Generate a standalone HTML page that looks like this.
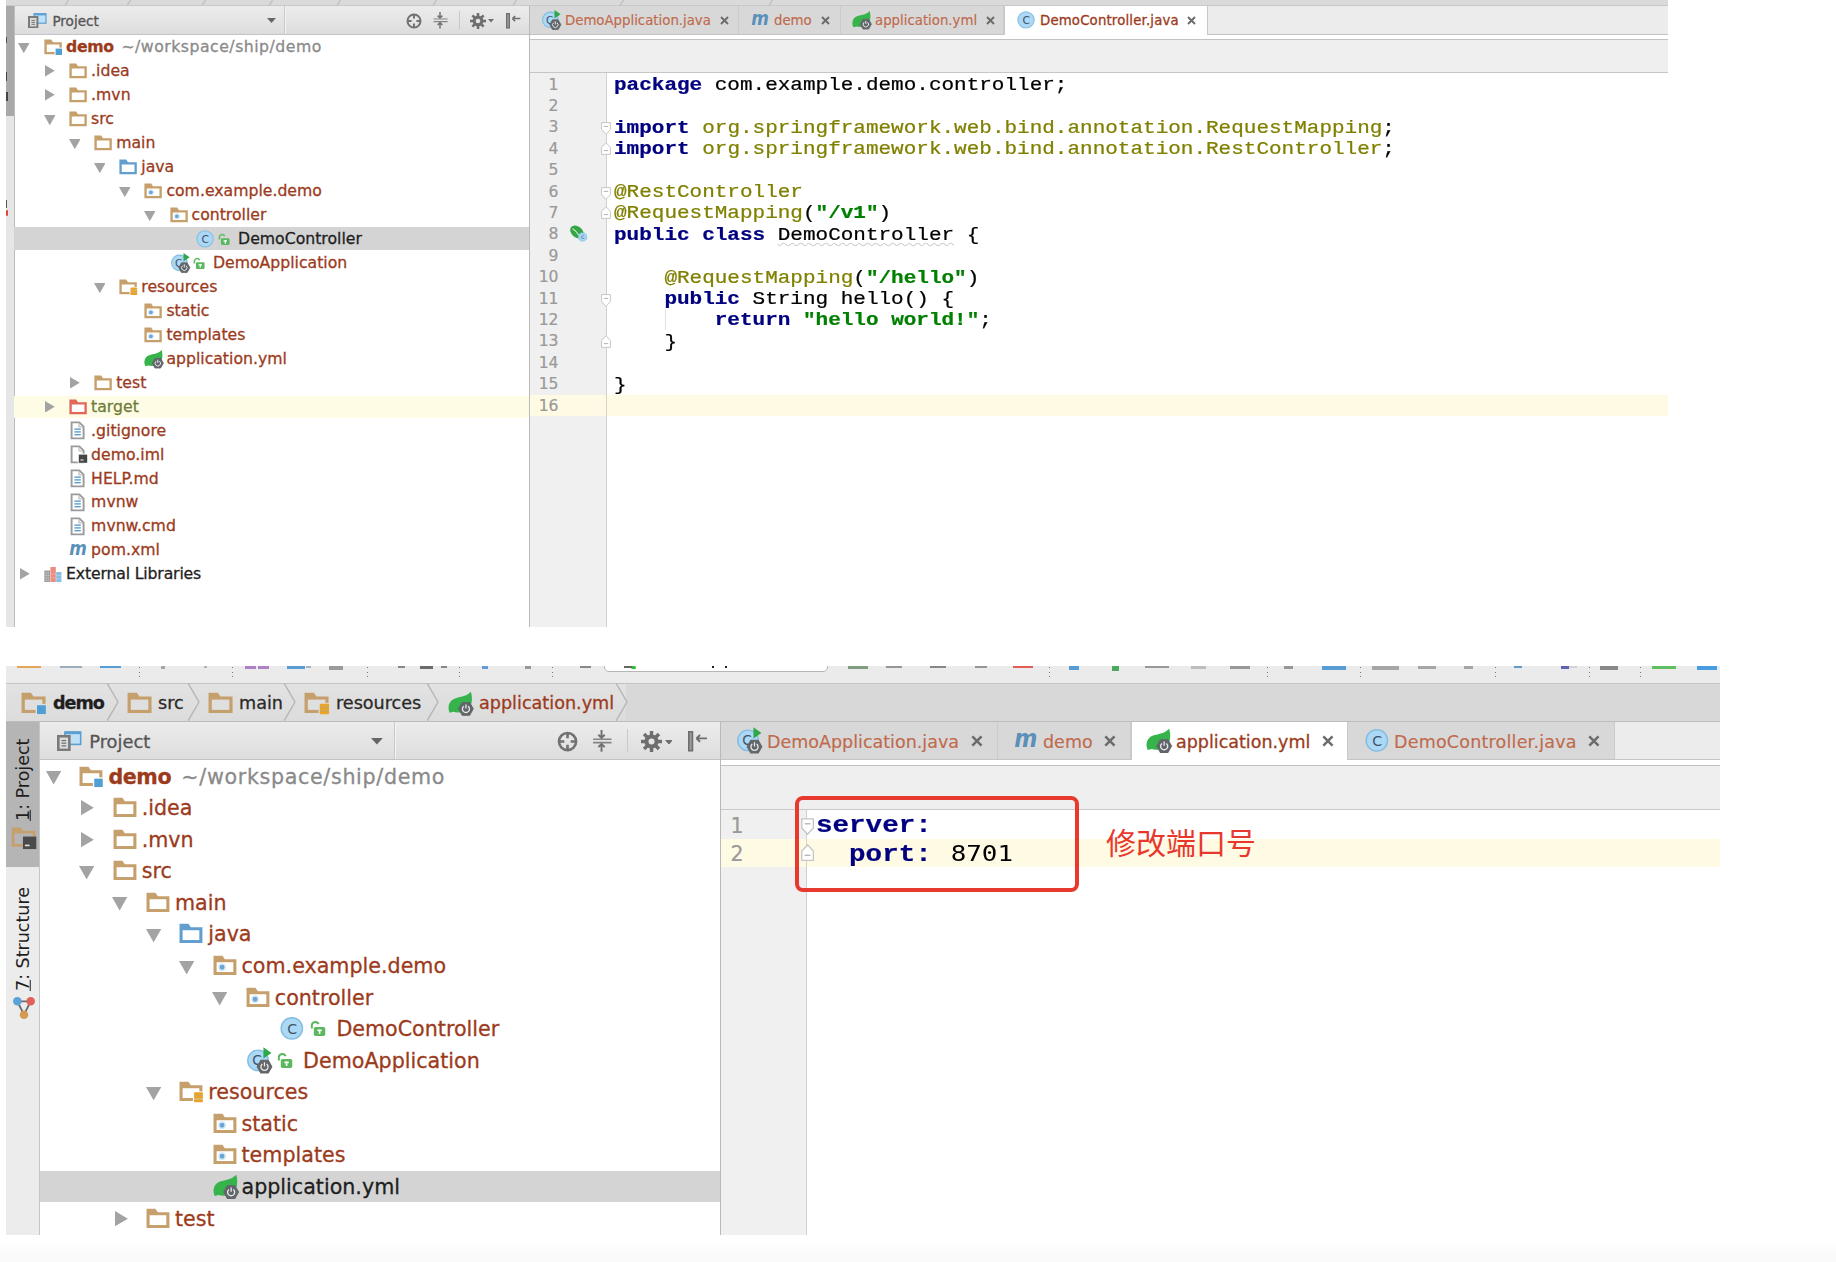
<!DOCTYPE html><html><head><meta charset="utf-8"><title>IDE screenshots</title>
<style>html,body{margin:0;padding:0;background:#fff}body{width:1836px;height:1262px;position:relative;overflow:hidden}svg{display:block}</style></head><body>
<div style="position:absolute;left:0.00px;top:1239.00px;width:1836.00px;height:23.00px;background:linear-gradient(#ffffff,#fafafa 75%);"></div>
<div style="position:absolute;left:6px;top:0;width:1662px;height:627px;background:#fff;overflow:hidden">
<div style="position:absolute;left:-6px;top:0">
<div style="position:absolute;left:6.00px;top:0.00px;width:1662.00px;height:6.00px;background:#dadada;border-bottom:1px solid #c9c9c9;box-sizing:border-box"></div>
<div style="position:absolute;left:66.00px;top:-2.00px;width:1.50px;height:9.00px;background:#c4c4c4;transform:skewX(-32deg)"></div>
<div style="position:absolute;left:128.00px;top:-2.00px;width:1.50px;height:9.00px;background:#c4c4c4;transform:skewX(-32deg)"></div>
<div style="position:absolute;left:203.00px;top:-2.00px;width:1.50px;height:9.00px;background:#c4c4c4;transform:skewX(-32deg)"></div>
<div style="position:absolute;left:270.00px;top:-2.00px;width:1.50px;height:9.00px;background:#c4c4c4;transform:skewX(-32deg)"></div>
<div style="position:absolute;left:338.00px;top:-2.00px;width:1.50px;height:9.00px;background:#c4c4c4;transform:skewX(-32deg)"></div>
<div style="position:absolute;left:434.00px;top:-2.00px;width:1.50px;height:9.00px;background:#c4c4c4;transform:skewX(-32deg)"></div>
<div style="position:absolute;left:514.00px;top:-2.00px;width:1.50px;height:9.00px;background:#c4c4c4;transform:skewX(-32deg)"></div>
<div style="position:absolute;left:621.00px;top:-2.00px;width:1.50px;height:9.00px;background:#c4c4c4;transform:skewX(-32deg)"></div>
<div style="position:absolute;left:770.00px;top:-2.00px;width:1.50px;height:9.00px;background:#c4c4c4;transform:skewX(-32deg)"></div>
<div style="position:absolute;left:6.00px;top:6.00px;width:8.00px;height:110.00px;background:#a9a9a9;"></div>
<div style="position:absolute;left:6.00px;top:116.00px;width:8.00px;height:511.00px;background:#e6e6e6;"></div>
<div style="position:absolute;left:6.00px;top:37.00px;width:1.30px;height:6.00px;background:#555;"></div>
<div style="position:absolute;left:6.00px;top:72.00px;width:1.40px;height:9.00px;background:#444;"></div>
<div style="position:absolute;left:6.00px;top:92.00px;width:1.80px;height:9.00px;background:#444;"></div>
<div style="position:absolute;left:6.00px;top:200.00px;width:1.20px;height:8.00px;background:#555;"></div>
<div style="position:absolute;left:6.00px;top:210.00px;width:2.40px;height:6.00px;background:#e04a3a;border-radius:2px"></div>
<div style="position:absolute;left:14.00px;top:6.00px;width:1.00px;height:621.00px;background:#bdbdbd;"></div>
<div style="position:absolute;left:15.00px;top:6.00px;width:514.00px;height:29.00px;background:linear-gradient(#ececec,#dddddd);border-bottom:1px solid #c4c4c4;box-sizing:border-box"></div>
<svg style="position:absolute;left:28.20px;top:12.70px" width="19.00" height="15.00" viewBox="0 0 19 15" ><rect x="6" y="0.8" width="12" height="9.4" fill="#bfe0f6" stroke="#5b9fd0" stroke-width="1.2"/><rect x="6" y="0.4" width="12" height="2" fill="#5b9fd0"/><rect x="1" y="4" width="8.4" height="10.4" fill="#dcdcdc" stroke="#7a7a7a" stroke-width="2"/><rect x="3.4" y="6.8" width="3.6" height="1" fill="#777"/><rect x="3.4" y="8.8" width="3.6" height="1" fill="#777"/><rect x="3.4" y="10.8" width="3.6" height="1" fill="#777"/></svg>
<div style="position:absolute;left:52.40px;top:11.21px;height:20.36px;line-height:20.36px;font-family:'DejaVu Sans','Liberation Sans',sans-serif;font-size:13.57px;color:#555;font-weight:normal;white-space:pre;-webkit-text-stroke-width:0.3px;">Project</div>
<svg style="position:absolute;left:266.50px;top:18.40px" width="9.00" height="5.00" viewBox="0 0 9 5" ><path d="M0 0 H9 L4.5 5 Z" fill="#666"/></svg>
<div style="position:absolute;left:284.00px;top:6.00px;width:1.00px;height:28.00px;background:#c9c9c9;border-right:1px solid #f3f3f3"></div>
<svg style="position:absolute;left:405.60px;top:12.90px" width="16.00" height="16.00" viewBox="0 0 16 16" ><circle cx="8" cy="8" r="6.5" fill="none" stroke="#727272" stroke-width="2"/><path d="M8 1 V5.6 M8 10.4 V15 M1 8 H5.6 M10.4 8 H15" stroke="#727272" stroke-width="2"/></svg>
<svg style="position:absolute;left:432.00px;top:12.40px" width="16.00" height="16.60" viewBox="0 0 16 16.6" ><path d="M1.6 7 H15.6 M1.6 9.6 H15.6" stroke="#858585" stroke-width="1.2"/><path d="M8 0 V5.6 M5.6 3.6 L8 6 L10.4 3.6 M8 16.6 V11 M5.6 13 L8 10.6 L10.4 13" stroke="#727272" stroke-width="1.5" fill="none"/></svg>
<div style="position:absolute;left:459.00px;top:11.00px;width:1.00px;height:18.00px;background:#c9c9c9;"></div>
<svg style="position:absolute;left:470.00px;top:12.80px" width="16.00" height="16.00" viewBox="0 0 16 16" ><rect x="6.7" y="0" width="2.6" height="16" fill="#6e6e6e" transform="rotate(0 8 8)"/><rect x="6.7" y="0" width="2.6" height="16" fill="#6e6e6e" transform="rotate(45 8 8)"/><rect x="6.7" y="0" width="2.6" height="16" fill="#6e6e6e" transform="rotate(90 8 8)"/><rect x="6.7" y="0" width="2.6" height="16" fill="#6e6e6e" transform="rotate(135 8 8)"/><circle cx="8" cy="8" r="5.4" fill="#6e6e6e"/><circle cx="8" cy="8" r="2.3" fill="#e4e4e4"/></svg>
<svg style="position:absolute;left:487.60px;top:19.40px" width="6.00" height="3.60" viewBox="0 0 6 3.6" ><path d="M0 0 H6 L3 3.6 Z" fill="#6e6e6e"/></svg>
<svg style="position:absolute;left:505.60px;top:12.60px" width="15.00" height="16.00" viewBox="0 0 15 16" ><rect x="0.6" y="0.6" width="2.8" height="14.4" fill="#9a9a9a" stroke="#6e6e6e" stroke-width="1.2"/><path d="M6.4 5.6 H14.4 M6.4 5.6 L9.2 3 M6.4 5.6 L9.2 8.2" stroke="#6e6e6e" stroke-width="1.5" fill="none"/></svg>
<svg style="position:absolute;left:18.40px;top:43.48px" width="11.60" height="10.20" viewBox="0 0 11.6 10.2" ><path d="M0 0 H11.6 L5.8 10.2 Z" fill="#a3a3a3"/></svg>
<svg style="position:absolute;left:44.00px;top:39.28px" width="18.00" height="16.00" viewBox="0 0 18 16" overflow="visible"><path d="M0.4 0.5 H7.2 L9 3.2 H17.8 V15.3 H0.4 Z" fill="#c6a06c"/><rect x="2.75" y="5.5" width="12.7" height="7.45" fill="#fff"/><rect x="10.6" y="8.6" width="7.4" height="7.4" fill="#fff"/><rect x="11.6" y="9.6" width="6.4" height="6.4" fill="#4f9fd6"/></svg>
<div style="position:absolute;left:66.00px;top:35.40px;height:23.55px;line-height:23.55px;font-family:'DejaVu Sans','Liberation Sans',sans-serif;font-size:15.70px;color:#9c3b1c;font-weight:normal;white-space:pre;-webkit-text-stroke-width:0.3px;"><b style="letter-spacing:-0.02em">demo</b><span style="color:#8a8a8a;font-weight:normal;letter-spacing:0.50px;margin-left:2.21px"> ~/workspace/ship/demo</span></div>
<svg style="position:absolute;left:45.30px;top:65.42px" width="9.80" height="11.60" viewBox="0 0 9.8 11.6" ><path d="M0 0 V11.6 L9.8 5.8 Z" fill="#a3a3a3"/></svg>
<svg style="position:absolute;left:69.10px;top:63.23px" width="18.00" height="16.00" viewBox="0 0 18 16" overflow="visible"><path d="M0.4 0.5 H7.2 L9 3.2 H17.8 V15.3 H0.4 Z" fill="#c6a06c"/><rect x="2.75" y="5.5" width="12.7" height="7.45" fill="#fff"/></svg>
<div style="position:absolute;left:91.10px;top:59.35px;height:23.55px;line-height:23.55px;font-family:'DejaVu Sans','Liberation Sans',sans-serif;font-size:15.70px;color:#9c3b1c;font-weight:normal;white-space:pre;letter-spacing:0.0px;-webkit-text-stroke-width:0.3px;">.idea</div>
<svg style="position:absolute;left:45.30px;top:89.37px" width="9.80" height="11.60" viewBox="0 0 9.8 11.6" ><path d="M0 0 V11.6 L9.8 5.8 Z" fill="#a3a3a3"/></svg>
<svg style="position:absolute;left:69.10px;top:87.17px" width="18.00" height="16.00" viewBox="0 0 18 16" overflow="visible"><path d="M0.4 0.5 H7.2 L9 3.2 H17.8 V15.3 H0.4 Z" fill="#c6a06c"/><rect x="2.75" y="5.5" width="12.7" height="7.45" fill="#fff"/></svg>
<div style="position:absolute;left:91.10px;top:83.30px;height:23.55px;line-height:23.55px;font-family:'DejaVu Sans','Liberation Sans',sans-serif;font-size:15.70px;color:#9c3b1c;font-weight:normal;white-space:pre;letter-spacing:0.0px;-webkit-text-stroke-width:0.3px;">.mvn</div>
<svg style="position:absolute;left:43.50px;top:115.32px" width="11.60" height="10.20" viewBox="0 0 11.6 10.2" ><path d="M0 0 H11.6 L5.8 10.2 Z" fill="#a3a3a3"/></svg>
<svg style="position:absolute;left:69.10px;top:111.12px" width="18.00" height="16.00" viewBox="0 0 18 16" overflow="visible"><path d="M0.4 0.5 H7.2 L9 3.2 H17.8 V15.3 H0.4 Z" fill="#c6a06c"/><rect x="2.75" y="5.5" width="12.7" height="7.45" fill="#fff"/></svg>
<div style="position:absolute;left:91.10px;top:107.25px;height:23.55px;line-height:23.55px;font-family:'DejaVu Sans','Liberation Sans',sans-serif;font-size:15.70px;color:#9c3b1c;font-weight:normal;white-space:pre;letter-spacing:0.0px;-webkit-text-stroke-width:0.3px;">src</div>
<svg style="position:absolute;left:68.60px;top:139.28px" width="11.60" height="10.20" viewBox="0 0 11.6 10.2" ><path d="M0 0 H11.6 L5.8 10.2 Z" fill="#a3a3a3"/></svg>
<svg style="position:absolute;left:94.20px;top:135.07px" width="18.00" height="16.00" viewBox="0 0 18 16" overflow="visible"><path d="M0.4 0.5 H7.2 L9 3.2 H17.8 V15.3 H0.4 Z" fill="#c6a06c"/><rect x="2.75" y="5.5" width="12.7" height="7.45" fill="#fff"/></svg>
<div style="position:absolute;left:116.20px;top:131.20px;height:23.55px;line-height:23.55px;font-family:'DejaVu Sans','Liberation Sans',sans-serif;font-size:15.70px;color:#9c3b1c;font-weight:normal;white-space:pre;letter-spacing:0.0px;-webkit-text-stroke-width:0.3px;">main</div>
<svg style="position:absolute;left:93.70px;top:163.22px" width="11.60" height="10.20" viewBox="0 0 11.6 10.2" ><path d="M0 0 H11.6 L5.8 10.2 Z" fill="#a3a3a3"/></svg>
<svg style="position:absolute;left:119.30px;top:159.02px" width="18.00" height="16.00" viewBox="0 0 18 16" overflow="visible"><path d="M0.4 0.5 H7.2 L9 3.2 H17.8 V15.3 H0.4 Z" fill="#639fce"/><rect x="2.75" y="5.5" width="12.7" height="7.45" fill="#fff"/></svg>
<div style="position:absolute;left:141.30px;top:155.15px;height:23.55px;line-height:23.55px;font-family:'DejaVu Sans','Liberation Sans',sans-serif;font-size:15.70px;color:#9c3b1c;font-weight:normal;white-space:pre;letter-spacing:0.0px;-webkit-text-stroke-width:0.3px;">java</div>
<svg style="position:absolute;left:118.80px;top:187.17px" width="11.60" height="10.20" viewBox="0 0 11.6 10.2" ><path d="M0 0 H11.6 L5.8 10.2 Z" fill="#a3a3a3"/></svg>
<svg style="position:absolute;left:144.40px;top:182.97px" width="18.00" height="16.00" viewBox="0 0 18 16" overflow="visible"><path d="M0.4 0.5 H7.2 L9 3.2 H17.8 V15.3 H0.4 Z" fill="#c6a06c"/><rect x="2.75" y="5.5" width="12.7" height="7.45" fill="#fff"/><circle cx="6.9" cy="9.3" r="2.4" fill="#69a6d6" stroke="#d6e8f6" stroke-width="1.1"/></svg>
<div style="position:absolute;left:166.40px;top:179.10px;height:23.55px;line-height:23.55px;font-family:'DejaVu Sans','Liberation Sans',sans-serif;font-size:15.70px;color:#9c3b1c;font-weight:normal;white-space:pre;letter-spacing:0.0px;-webkit-text-stroke-width:0.3px;">com.example.demo</div>
<svg style="position:absolute;left:143.90px;top:211.13px" width="11.60" height="10.20" viewBox="0 0 11.6 10.2" ><path d="M0 0 H11.6 L5.8 10.2 Z" fill="#a3a3a3"/></svg>
<svg style="position:absolute;left:169.50px;top:206.93px" width="18.00" height="16.00" viewBox="0 0 18 16" overflow="visible"><path d="M0.4 0.5 H7.2 L9 3.2 H17.8 V15.3 H0.4 Z" fill="#c6a06c"/><rect x="2.75" y="5.5" width="12.7" height="7.45" fill="#fff"/><circle cx="6.9" cy="9.3" r="2.4" fill="#69a6d6" stroke="#d6e8f6" stroke-width="1.1"/></svg>
<div style="position:absolute;left:191.50px;top:203.05px;height:23.55px;line-height:23.55px;font-family:'DejaVu Sans','Liberation Sans',sans-serif;font-size:15.70px;color:#9c3b1c;font-weight:normal;white-space:pre;letter-spacing:0.0px;-webkit-text-stroke-width:0.3px;">controller</div>
<div style="position:absolute;left:14.00px;top:226.80px;width:515.00px;height:23.55px;background:#d4d4d4;"></div>
<svg style="position:absolute;left:195.60px;top:230.88px" width="18.00" height="16.00" viewBox="0 0 18 16" overflow="visible"><circle cx="9" cy="7.9" r="8.1" fill="#abd9f5" stroke="#85bde3" stroke-width="1.1"/><text x="9.2" y="11.8" font-family="DejaVu Sans, sans-serif" font-size="10.8" text-anchor="middle" fill="#3d5268">C</text></svg>
<svg style="position:absolute;left:218.40px;top:232.58px" width="13.00" height="13.00" viewBox="0 0 13 13" ><path d="M1.4 6.4 V3.8 A2.7 2.7 0 0 1 6.6 3.2" fill="none" stroke="#5cb85f" stroke-width="1.5"/><rect x="2.9" y="5.3" width="8.7" height="6.8" rx="1.3" fill="#5cb85f"/><rect x="5.6" y="7.3" width="3.4" height="1.2" fill="#fff"/><rect x="6.7" y="7.3" width="1.2" height="3.3" fill="#fff"/></svg>
<div style="position:absolute;left:238.10px;top:227.00px;height:23.55px;line-height:23.55px;font-family:'DejaVu Sans','Liberation Sans',sans-serif;font-size:15.70px;color:#1e1e1e;font-weight:normal;white-space:pre;letter-spacing:0.0px;-webkit-text-stroke-width:0.3px;">DemoController</div>
<svg style="position:absolute;left:170.50px;top:254.83px" width="18.00" height="16.00" viewBox="0 0 18 16" overflow="visible"><circle cx="8.4" cy="7.9" r="7.8" fill="#abd9f5" stroke="#85bde3" stroke-width="1.1"/><text x="7.6" y="11.6" font-family="DejaVu Sans, sans-serif" font-size="10.4" text-anchor="middle" fill="#3d5268">C</text><path d="M12.5 -2 L18.6 2.2 L12.5 6.4 Z" fill="#2fa84a"/><polygon points="18.90,12.70 16.10,17.55 10.50,17.55 7.70,12.70 10.50,7.85 16.10,7.85" fill="#62666a" stroke="#62666a" stroke-width="0.8" stroke-linejoin="round"/><path d="M11.60 10.70 A2.7 2.7 0 1 0 15.00 10.70" fill="none" stroke="#e9e9e9" stroke-width="1"/><path d="M13.30 9.30 V12.50" stroke="#e9e9e9" stroke-width="1"/></svg>
<svg style="position:absolute;left:193.30px;top:256.53px" width="13.00" height="13.00" viewBox="0 0 13 13" ><path d="M1.4 6.4 V3.8 A2.7 2.7 0 0 1 6.6 3.2" fill="none" stroke="#5cb85f" stroke-width="1.5"/><rect x="2.9" y="5.3" width="8.7" height="6.8" rx="1.3" fill="#5cb85f"/><rect x="5.6" y="7.3" width="3.4" height="1.2" fill="#fff"/><rect x="6.7" y="7.3" width="1.2" height="3.3" fill="#fff"/></svg>
<div style="position:absolute;left:213.00px;top:250.95px;height:23.55px;line-height:23.55px;font-family:'DejaVu Sans','Liberation Sans',sans-serif;font-size:15.70px;color:#9c3b1c;font-weight:normal;white-space:pre;letter-spacing:0.0px;-webkit-text-stroke-width:0.3px;">DemoApplication</div>
<svg style="position:absolute;left:93.70px;top:282.98px" width="11.60" height="10.20" viewBox="0 0 11.6 10.2" ><path d="M0 0 H11.6 L5.8 10.2 Z" fill="#a3a3a3"/></svg>
<svg style="position:absolute;left:119.30px;top:278.78px" width="18.00" height="16.00" viewBox="0 0 18 16" overflow="visible"><path d="M0.4 0.5 H7.2 L9 3.2 H17.8 V15.3 H0.4 Z" fill="#c6a06c"/><rect x="2.75" y="5.5" width="12.7" height="7.45" fill="#fff"/><rect x="10.6" y="7.9" width="7.6" height="8.6" fill="#fff"/><rect x="11.4" y="8.6" width="6.8" height="2.1" rx="0.6" fill="#eaa428"/><rect x="11.4" y="11.3" width="6.8" height="2.1" rx="0.6" fill="#eaa428"/><rect x="11.4" y="14" width="6.8" height="2.1" rx="0.6" fill="#eaa428"/><path d="M11.4 11 H18.2 M11.4 13.7 H18.2" stroke="#b97d12" stroke-width="0.5"/></svg>
<div style="position:absolute;left:141.30px;top:274.90px;height:23.55px;line-height:23.55px;font-family:'DejaVu Sans','Liberation Sans',sans-serif;font-size:15.70px;color:#9c3b1c;font-weight:normal;white-space:pre;letter-spacing:0.0px;-webkit-text-stroke-width:0.3px;">resources</div>
<svg style="position:absolute;left:144.40px;top:302.73px" width="18.00" height="16.00" viewBox="0 0 18 16" overflow="visible"><path d="M0.4 0.5 H7.2 L9 3.2 H17.8 V15.3 H0.4 Z" fill="#c6a06c"/><rect x="2.75" y="5.5" width="12.7" height="7.45" fill="#fff"/><circle cx="6.9" cy="9.3" r="2.4" fill="#69a6d6" stroke="#d6e8f6" stroke-width="1.1"/></svg>
<div style="position:absolute;left:166.40px;top:298.85px;height:23.55px;line-height:23.55px;font-family:'DejaVu Sans','Liberation Sans',sans-serif;font-size:15.70px;color:#9c3b1c;font-weight:normal;white-space:pre;letter-spacing:0.0px;-webkit-text-stroke-width:0.3px;">static</div>
<svg style="position:absolute;left:144.40px;top:326.68px" width="18.00" height="16.00" viewBox="0 0 18 16" overflow="visible"><path d="M0.4 0.5 H7.2 L9 3.2 H17.8 V15.3 H0.4 Z" fill="#c6a06c"/><rect x="2.75" y="5.5" width="12.7" height="7.45" fill="#fff"/><circle cx="6.9" cy="9.3" r="2.4" fill="#69a6d6" stroke="#d6e8f6" stroke-width="1.1"/></svg>
<div style="position:absolute;left:166.40px;top:322.80px;height:23.55px;line-height:23.55px;font-family:'DejaVu Sans','Liberation Sans',sans-serif;font-size:15.70px;color:#9c3b1c;font-weight:normal;white-space:pre;letter-spacing:0.0px;-webkit-text-stroke-width:0.3px;">templates</div>
<svg style="position:absolute;left:144.40px;top:350.62px" width="18.00" height="16.00" viewBox="0 0 18 16" overflow="visible"><path d="M17.6 -0.9 C18.8 3 18.9 8 16.6 11.5 C14 15 8 15.6 4.2 14.5 L1.3 15.2 C-0.6 11 0.6 6.5 4.5 4.6 C8.5 2.8 13.5 3.4 17.6 -0.9 Z" fill="#36b34a"/><polygon points="19.40,12.20 16.60,17.05 11.00,17.05 8.20,12.20 11.00,7.35 16.60,7.35" fill="#62666a" stroke="#62666a" stroke-width="0.8" stroke-linejoin="round"/><path d="M12.10 10.20 A2.7 2.7 0 1 0 15.50 10.20" fill="none" stroke="#e9e9e9" stroke-width="1"/><path d="M13.80 8.80 V12.00" stroke="#e9e9e9" stroke-width="1"/></svg>
<div style="position:absolute;left:166.40px;top:346.75px;height:23.55px;line-height:23.55px;font-family:'DejaVu Sans','Liberation Sans',sans-serif;font-size:15.70px;color:#9c3b1c;font-weight:normal;white-space:pre;letter-spacing:0.0px;-webkit-text-stroke-width:0.3px;">application.yml</div>
<svg style="position:absolute;left:70.40px;top:376.78px" width="9.80" height="11.60" viewBox="0 0 9.8 11.6" ><path d="M0 0 V11.6 L9.8 5.8 Z" fill="#a3a3a3"/></svg>
<svg style="position:absolute;left:94.20px;top:374.58px" width="18.00" height="16.00" viewBox="0 0 18 16" overflow="visible"><path d="M0.4 0.5 H7.2 L9 3.2 H17.8 V15.3 H0.4 Z" fill="#c6a06c"/><rect x="2.75" y="5.5" width="12.7" height="7.45" fill="#fff"/></svg>
<div style="position:absolute;left:116.20px;top:370.70px;height:23.55px;line-height:23.55px;font-family:'DejaVu Sans','Liberation Sans',sans-serif;font-size:15.70px;color:#9c3b1c;font-weight:normal;white-space:pre;letter-spacing:0.0px;-webkit-text-stroke-width:0.3px;">test</div>
<div style="position:absolute;left:14.00px;top:395.85px;width:515.00px;height:22.15px;background:#fefce5;"></div>
<svg style="position:absolute;left:45.30px;top:400.73px" width="9.80" height="11.60" viewBox="0 0 9.8 11.6" ><path d="M0 0 V11.6 L9.8 5.8 Z" fill="#a3a3a3"/></svg>
<svg style="position:absolute;left:69.10px;top:398.53px" width="18.00" height="16.00" viewBox="0 0 18 16" overflow="visible"><path d="M0.4 0.5 H7.2 L9 3.2 H17.8 V15.3 H0.4 Z" fill="#e1675b"/><rect x="2.75" y="5.5" width="12.7" height="7.45" fill="#fff"/></svg>
<div style="position:absolute;left:91.10px;top:394.65px;height:23.55px;line-height:23.55px;font-family:'DejaVu Sans','Liberation Sans',sans-serif;font-size:15.70px;color:#6f7d3a;font-weight:normal;white-space:pre;letter-spacing:0.0px;-webkit-text-stroke-width:0.3px;">target</div>
<svg style="position:absolute;left:69.10px;top:422.48px" width="18.00" height="16.00" viewBox="0 0 18 16" overflow="visible"><path d="M2.6 0.4 H10.4 L14.6 4.6 V16.4 H2.6 Z" fill="#fff" stroke="#9a9a9a" stroke-width="1.9"/><path d="M10 0.6 V5 H14.4" fill="none" stroke="#b5b5b5" stroke-width="1"/><rect x="5.4" y="6.4" width="6.4" height="1.4" fill="#5b9fd0"/><rect x="5.4" y="9.2" width="6.4" height="1.4" fill="#5b9fd0"/><rect x="5.4" y="12" width="6.4" height="1.4" fill="#5b9fd0"/></svg>
<div style="position:absolute;left:91.10px;top:418.60px;height:23.55px;line-height:23.55px;font-family:'DejaVu Sans','Liberation Sans',sans-serif;font-size:15.70px;color:#9c3b1c;font-weight:normal;white-space:pre;letter-spacing:0.0px;-webkit-text-stroke-width:0.3px;">.gitignore</div>
<svg style="position:absolute;left:69.10px;top:446.43px" width="18.00" height="16.00" viewBox="0 0 18 16" overflow="visible"><path d="M2.6 0.4 H10.4 L14.6 4.6 V16.4 H2.6 Z" fill="#fff" stroke="#9a9a9a" stroke-width="1.9"/><path d="M10 0.6 V5 H14.4" fill="none" stroke="#b5b5b5" stroke-width="1"/><rect x="8.8" y="7.6" width="9.8" height="9.8" fill="#fff"/><rect x="9.8" y="8.6" width="8.4" height="8.2" fill="#454545"/><rect x="11.4" y="13.4" width="3.2" height="1.2" fill="#ddd"/></svg>
<div style="position:absolute;left:91.10px;top:442.55px;height:23.55px;line-height:23.55px;font-family:'DejaVu Sans','Liberation Sans',sans-serif;font-size:15.70px;color:#9c3b1c;font-weight:normal;white-space:pre;letter-spacing:0.0px;-webkit-text-stroke-width:0.3px;">demo.iml</div>
<svg style="position:absolute;left:69.10px;top:470.38px" width="18.00" height="16.00" viewBox="0 0 18 16" overflow="visible"><path d="M2.6 0.4 H10.4 L14.6 4.6 V16.4 H2.6 Z" fill="#fff" stroke="#9a9a9a" stroke-width="1.9"/><path d="M10 0.6 V5 H14.4" fill="none" stroke="#b5b5b5" stroke-width="1"/><rect x="5.4" y="6.4" width="6.4" height="1.4" fill="#5b9fd0"/><rect x="5.4" y="9.2" width="6.4" height="1.4" fill="#5b9fd0"/><rect x="5.4" y="12" width="6.4" height="1.4" fill="#5b9fd0"/></svg>
<div style="position:absolute;left:91.10px;top:466.50px;height:23.55px;line-height:23.55px;font-family:'DejaVu Sans','Liberation Sans',sans-serif;font-size:15.70px;color:#9c3b1c;font-weight:normal;white-space:pre;letter-spacing:0.0px;-webkit-text-stroke-width:0.3px;">HELP.md</div>
<svg style="position:absolute;left:69.10px;top:494.33px" width="18.00" height="16.00" viewBox="0 0 18 16" overflow="visible"><path d="M2.6 0.4 H10.4 L14.6 4.6 V16.4 H2.6 Z" fill="#fff" stroke="#9a9a9a" stroke-width="1.9"/><path d="M10 0.6 V5 H14.4" fill="none" stroke="#b5b5b5" stroke-width="1"/><rect x="5.4" y="6.4" width="6.4" height="1.4" fill="#5b9fd0"/><rect x="5.4" y="9.2" width="6.4" height="1.4" fill="#5b9fd0"/><rect x="5.4" y="12" width="6.4" height="1.4" fill="#5b9fd0"/></svg>
<div style="position:absolute;left:91.10px;top:490.45px;height:23.55px;line-height:23.55px;font-family:'DejaVu Sans','Liberation Sans',sans-serif;font-size:15.70px;color:#9c3b1c;font-weight:normal;white-space:pre;letter-spacing:0.0px;-webkit-text-stroke-width:0.3px;">mvnw</div>
<svg style="position:absolute;left:69.10px;top:518.28px" width="18.00" height="16.00" viewBox="0 0 18 16" overflow="visible"><path d="M2.6 0.4 H10.4 L14.6 4.6 V16.4 H2.6 Z" fill="#fff" stroke="#9a9a9a" stroke-width="1.9"/><path d="M10 0.6 V5 H14.4" fill="none" stroke="#b5b5b5" stroke-width="1"/><rect x="5.4" y="6.4" width="6.4" height="1.4" fill="#5b9fd0"/><rect x="5.4" y="9.2" width="6.4" height="1.4" fill="#5b9fd0"/><rect x="5.4" y="12" width="6.4" height="1.4" fill="#5b9fd0"/></svg>
<div style="position:absolute;left:91.10px;top:514.40px;height:23.55px;line-height:23.55px;font-family:'DejaVu Sans','Liberation Sans',sans-serif;font-size:15.70px;color:#9c3b1c;font-weight:normal;white-space:pre;letter-spacing:0.0px;-webkit-text-stroke-width:0.3px;">mvnw.cmd</div>
<svg style="position:absolute;left:69.10px;top:542.23px" width="18.00" height="16.00" viewBox="0 0 18 16" overflow="visible"><text x="0.2" y="13" font-family="DejaVu Sans, sans-serif" font-size="19" font-weight="bold" font-style="italic" fill="#5a90ba" textLength="17.6" lengthAdjust="spacingAndGlyphs">m</text></svg>
<div style="position:absolute;left:91.10px;top:538.35px;height:23.55px;line-height:23.55px;font-family:'DejaVu Sans','Liberation Sans',sans-serif;font-size:15.70px;color:#9c3b1c;font-weight:normal;white-space:pre;letter-spacing:0.0px;-webkit-text-stroke-width:0.3px;">pom.xml</div>
<svg style="position:absolute;left:20.20px;top:568.38px" width="9.80" height="11.60" viewBox="0 0 9.8 11.6" ><path d="M0 0 V11.6 L9.8 5.8 Z" fill="#a3a3a3"/></svg>
<svg style="position:absolute;left:44.00px;top:566.18px" width="18.00" height="16.00" viewBox="0 0 18 16" overflow="visible"><rect x="0.4" y="4.6" width="5.6" height="11.4" fill="#8d8d8d"/><path d="M0.4 7 H6 M0.4 9.4 H6 M0.4 11.8 H6 M0.4 14.2 H6 M2.2 4.6 V16 M4.2 4.6 V16" stroke="#c9c9c9" stroke-width="0.7"/><rect x="6.4" y="1" width="5.4" height="15" fill="#ea8d80"/><path d="M6.4 8 H11.8 M6.4 12 H11.8" stroke="#f4b5ab" stroke-width="0.7"/><rect x="12.2" y="6" width="5.2" height="10" fill="#86bde3"/><path d="M12.2 9.6 H17.4 M12.2 12.8 H17.4" stroke="#b9daf0" stroke-width="0.7"/></svg>
<div style="position:absolute;left:66.00px;top:562.30px;height:23.55px;line-height:23.55px;font-family:'DejaVu Sans','Liberation Sans',sans-serif;font-size:15.70px;color:#222;font-weight:normal;white-space:pre;letter-spacing:-0.15px;-webkit-text-stroke-width:0.3px;">External Libraries</div>
<div style="position:absolute;left:529.00px;top:6.00px;width:1.00px;height:621.00px;background:#b9b9b9;"></div>
<div style="position:absolute;left:530.00px;top:6.00px;width:1138.00px;height:29.00px;background:#ececec;"></div>
<div style="position:absolute;left:530.00px;top:6.00px;width:209.00px;height:29.00px;background:#d8d8d8;border-right:1px solid #cbcbcb;box-sizing:border-box"></div>
<svg style="position:absolute;left:542.00px;top:12.10px" width="18.00" height="16.00" viewBox="0 0 18 16" overflow="visible"><circle cx="8.4" cy="7.9" r="7.8" fill="#abd9f5" stroke="#85bde3" stroke-width="1.1"/><text x="7.6" y="11.6" font-family="DejaVu Sans, sans-serif" font-size="10.4" text-anchor="middle" fill="#3d5268">C</text><path d="M12.5 -2 L18.6 2.2 L12.5 6.4 Z" fill="#2fa84a"/><polygon points="18.90,12.70 16.10,17.55 10.50,17.55 7.70,12.70 10.50,7.85 16.10,7.85" fill="#62666a" stroke="#62666a" stroke-width="0.8" stroke-linejoin="round"/><path d="M11.60 10.70 A2.7 2.7 0 1 0 15.00 10.70" fill="none" stroke="#e9e9e9" stroke-width="1"/><path d="M13.30 9.30 V12.50" stroke="#e9e9e9" stroke-width="1"/></svg>
<div style="position:absolute;left:565.00px;top:11.12px;height:19.95px;line-height:19.95px;font-family:'DejaVu Sans','Liberation Sans',sans-serif;font-size:13.30px;color:#c06a4c;font-weight:normal;white-space:pre;-webkit-text-stroke-width:0.15px;">DemoApplication.java</div>
<svg style="position:absolute;left:719.50px;top:16.20px" width="9.00" height="9.00" viewBox="0 0 9 9" ><path d="M1 1 L8 8 M8 1 L1 8" stroke="#6b6b6b" stroke-width="1.9"/></svg>
<div style="position:absolute;left:739.00px;top:6.00px;width:102.00px;height:29.00px;background:#d8d8d8;border-right:1px solid #cbcbcb;box-sizing:border-box"></div>
<svg style="position:absolute;left:751.00px;top:12.10px" width="18.00" height="16.00" viewBox="0 0 18 16" overflow="visible"><text x="0.2" y="13" font-family="DejaVu Sans, sans-serif" font-size="19" font-weight="bold" font-style="italic" fill="#5a90ba" textLength="17.6" lengthAdjust="spacingAndGlyphs">m</text></svg>
<div style="position:absolute;left:774.00px;top:11.12px;height:19.95px;line-height:19.95px;font-family:'DejaVu Sans','Liberation Sans',sans-serif;font-size:13.30px;color:#c06a4c;font-weight:normal;white-space:pre;-webkit-text-stroke-width:0.15px;">demo</div>
<svg style="position:absolute;left:820.50px;top:16.20px" width="9.00" height="9.00" viewBox="0 0 9 9" ><path d="M1 1 L8 8 M8 1 L1 8" stroke="#6b6b6b" stroke-width="1.9"/></svg>
<div style="position:absolute;left:841.00px;top:6.00px;width:163.00px;height:29.00px;background:#d8d8d8;border-right:1px solid #cbcbcb;box-sizing:border-box"></div>
<svg style="position:absolute;left:852.00px;top:12.10px" width="18.00" height="16.00" viewBox="0 0 18 16" overflow="visible"><path d="M17.6 -0.9 C18.8 3 18.9 8 16.6 11.5 C14 15 8 15.6 4.2 14.5 L1.3 15.2 C-0.6 11 0.6 6.5 4.5 4.6 C8.5 2.8 13.5 3.4 17.6 -0.9 Z" fill="#36b34a"/><polygon points="19.40,12.20 16.60,17.05 11.00,17.05 8.20,12.20 11.00,7.35 16.60,7.35" fill="#62666a" stroke="#62666a" stroke-width="0.8" stroke-linejoin="round"/><path d="M12.10 10.20 A2.7 2.7 0 1 0 15.50 10.20" fill="none" stroke="#e9e9e9" stroke-width="1"/><path d="M13.80 8.80 V12.00" stroke="#e9e9e9" stroke-width="1"/></svg>
<div style="position:absolute;left:875.00px;top:11.12px;height:19.95px;line-height:19.95px;font-family:'DejaVu Sans','Liberation Sans',sans-serif;font-size:13.30px;color:#c06a4c;font-weight:normal;white-space:pre;-webkit-text-stroke-width:0.15px;">application.yml</div>
<svg style="position:absolute;left:985.50px;top:16.20px" width="9.00" height="9.00" viewBox="0 0 9 9" ><path d="M1 1 L8 8 M8 1 L1 8" stroke="#6b6b6b" stroke-width="1.9"/></svg>
<div style="position:absolute;left:1004.00px;top:6.00px;width:204.00px;height:33.00px;background:#ffffff;border-left:1px solid #c9c9c9;border-right:1px solid #c9c9c9;box-sizing:border-box"></div>
<svg style="position:absolute;left:1017.00px;top:12.10px" width="18.00" height="16.00" viewBox="0 0 18 16" overflow="visible"><circle cx="9" cy="7.9" r="8.1" fill="#abd9f5" stroke="#85bde3" stroke-width="1.1"/><text x="9.2" y="11.8" font-family="DejaVu Sans, sans-serif" font-size="10.8" text-anchor="middle" fill="#3d5268">C</text></svg>
<div style="position:absolute;left:1040.00px;top:11.12px;height:19.95px;line-height:19.95px;font-family:'DejaVu Sans','Liberation Sans',sans-serif;font-size:13.30px;color:#9c3b1c;font-weight:normal;white-space:pre;letter-spacing:0.012em;-webkit-text-stroke-width:0.3px;">DemoController.java</div>
<svg style="position:absolute;left:1186.50px;top:16.20px" width="9.00" height="9.00" viewBox="0 0 9 9" ><path d="M1 1 L8 8 M8 1 L1 8" stroke="#6b6b6b" stroke-width="1.9"/></svg>
<div style="position:absolute;left:530.00px;top:35.00px;width:1138.00px;height:4.00px;background:#ffffff;"></div>
<div style="position:absolute;left:530.00px;top:34.20px;width:474.00px;height:1.20px;background:#c4c4c4;"></div>
<div style="position:absolute;left:1208.00px;top:34.20px;width:460.00px;height:1.20px;background:#c4c4c4;"></div>
<div style="position:absolute;left:530.00px;top:38.50px;width:1138.00px;height:1.20px;background:#c2c2c2;"></div>
<div style="position:absolute;left:530.00px;top:39.70px;width:1138.00px;height:33.30px;background:#efefef;border-bottom:1.2px solid #c6c6c6;box-sizing:border-box"></div>
<div style="position:absolute;left:530.00px;top:73.00px;width:77.00px;height:555.00px;background:#f0f0f0;border-right:1px solid #d0d0d0;box-sizing:border-box"></div>
<div style="position:absolute;left:530.00px;top:394.50px;width:1138.00px;height:21.50px;background:#fffae3;"></div>
<div style="position:absolute;left:606.00px;top:394.50px;width:1.00px;height:21.50px;background:#d8d4c4;"></div>
<div style="position:absolute;left:518.50px;top:73.50px;height:23.40px;line-height:23.40px;font-family:'DejaVu Sans','Liberation Sans',sans-serif;font-size:15.60px;color:#999;font-weight:normal;white-space:pre;width:40px;text-align:right;-webkit-text-stroke-width:0.2px;">1</div>
<div style="position:absolute;left:613.50px;top:72.00px;height:26.40px;line-height:26.40px;font-family:'Liberation Mono',monospace;font-size:17.60px;color:#000;font-weight:normal;white-space:pre;transform:scaleX(1.193);transform-origin:0 50%;-webkit-text-stroke-width:0.22px;"><b style="color:#000080">package</b> com.example.demo.controller;</div>
<div style="position:absolute;left:518.50px;top:94.90px;height:23.40px;line-height:23.40px;font-family:'DejaVu Sans','Liberation Sans',sans-serif;font-size:15.60px;color:#999;font-weight:normal;white-space:pre;width:40px;text-align:right;-webkit-text-stroke-width:0.2px;">2</div>
<div style="position:absolute;left:518.50px;top:116.30px;height:23.40px;line-height:23.40px;font-family:'DejaVu Sans','Liberation Sans',sans-serif;font-size:15.60px;color:#999;font-weight:normal;white-space:pre;width:40px;text-align:right;-webkit-text-stroke-width:0.2px;">3</div>
<div style="position:absolute;left:613.50px;top:114.80px;height:26.40px;line-height:26.40px;font-family:'Liberation Mono',monospace;font-size:17.60px;color:#000;font-weight:normal;white-space:pre;transform:scaleX(1.193);transform-origin:0 50%;-webkit-text-stroke-width:0.22px;"><b style="color:#000080">import</b> <span style="color:#808000">org.springframework.web.bind.annotation.RequestMapping</span>;</div>
<div style="position:absolute;left:518.50px;top:137.70px;height:23.40px;line-height:23.40px;font-family:'DejaVu Sans','Liberation Sans',sans-serif;font-size:15.60px;color:#999;font-weight:normal;white-space:pre;width:40px;text-align:right;-webkit-text-stroke-width:0.2px;">4</div>
<div style="position:absolute;left:613.50px;top:136.20px;height:26.40px;line-height:26.40px;font-family:'Liberation Mono',monospace;font-size:17.60px;color:#000;font-weight:normal;white-space:pre;transform:scaleX(1.193);transform-origin:0 50%;-webkit-text-stroke-width:0.22px;"><b style="color:#000080">import</b> <span style="color:#808000">org.springframework.web.bind.annotation.RestController</span>;</div>
<div style="position:absolute;left:518.50px;top:159.10px;height:23.40px;line-height:23.40px;font-family:'DejaVu Sans','Liberation Sans',sans-serif;font-size:15.60px;color:#999;font-weight:normal;white-space:pre;width:40px;text-align:right;-webkit-text-stroke-width:0.2px;">5</div>
<div style="position:absolute;left:518.50px;top:180.50px;height:23.40px;line-height:23.40px;font-family:'DejaVu Sans','Liberation Sans',sans-serif;font-size:15.60px;color:#999;font-weight:normal;white-space:pre;width:40px;text-align:right;-webkit-text-stroke-width:0.2px;">6</div>
<div style="position:absolute;left:613.50px;top:179.00px;height:26.40px;line-height:26.40px;font-family:'Liberation Mono',monospace;font-size:17.60px;color:#000;font-weight:normal;white-space:pre;transform:scaleX(1.193);transform-origin:0 50%;-webkit-text-stroke-width:0.22px;"><span style="color:#808000">@RestController</span></div>
<div style="position:absolute;left:518.50px;top:201.90px;height:23.40px;line-height:23.40px;font-family:'DejaVu Sans','Liberation Sans',sans-serif;font-size:15.60px;color:#999;font-weight:normal;white-space:pre;width:40px;text-align:right;-webkit-text-stroke-width:0.2px;">7</div>
<div style="position:absolute;left:613.50px;top:200.40px;height:26.40px;line-height:26.40px;font-family:'Liberation Mono',monospace;font-size:17.60px;color:#000;font-weight:normal;white-space:pre;transform:scaleX(1.193);transform-origin:0 50%;-webkit-text-stroke-width:0.22px;"><span style="color:#808000">@RequestMapping</span>(<b style="color:#008000">"/v1"</b>)</div>
<div style="position:absolute;left:518.50px;top:223.30px;height:23.40px;line-height:23.40px;font-family:'DejaVu Sans','Liberation Sans',sans-serif;font-size:15.60px;color:#999;font-weight:normal;white-space:pre;width:40px;text-align:right;-webkit-text-stroke-width:0.2px;">8</div>
<div style="position:absolute;left:613.50px;top:221.80px;height:26.40px;line-height:26.40px;font-family:'Liberation Mono',monospace;font-size:17.60px;color:#000;font-weight:normal;white-space:pre;transform:scaleX(1.193);transform-origin:0 50%;-webkit-text-stroke-width:0.22px;"><b style="color:#000080">public class</b> <span style="text-decoration:underline wavy #cfcfcf 1px;text-underline-offset:2px">DemoController</span> {</div>
<div style="position:absolute;left:518.50px;top:244.70px;height:23.40px;line-height:23.40px;font-family:'DejaVu Sans','Liberation Sans',sans-serif;font-size:15.60px;color:#999;font-weight:normal;white-space:pre;width:40px;text-align:right;-webkit-text-stroke-width:0.2px;">9</div>
<div style="position:absolute;left:518.50px;top:266.10px;height:23.40px;line-height:23.40px;font-family:'DejaVu Sans','Liberation Sans',sans-serif;font-size:15.60px;color:#999;font-weight:normal;white-space:pre;width:40px;text-align:right;-webkit-text-stroke-width:0.2px;">10</div>
<div style="position:absolute;left:613.50px;top:264.60px;height:26.40px;line-height:26.40px;font-family:'Liberation Mono',monospace;font-size:17.60px;color:#000;font-weight:normal;white-space:pre;transform:scaleX(1.193);transform-origin:0 50%;-webkit-text-stroke-width:0.22px;">    <span style="color:#808000">@RequestMapping</span>(<b style="color:#008000">"/hello"</b>)</div>
<div style="position:absolute;left:518.50px;top:287.50px;height:23.40px;line-height:23.40px;font-family:'DejaVu Sans','Liberation Sans',sans-serif;font-size:15.60px;color:#999;font-weight:normal;white-space:pre;width:40px;text-align:right;-webkit-text-stroke-width:0.2px;">11</div>
<div style="position:absolute;left:613.50px;top:286.00px;height:26.40px;line-height:26.40px;font-family:'Liberation Mono',monospace;font-size:17.60px;color:#000;font-weight:normal;white-space:pre;transform:scaleX(1.193);transform-origin:0 50%;-webkit-text-stroke-width:0.22px;">    <b style="color:#000080">public</b> String hello() {</div>
<div style="position:absolute;left:518.50px;top:308.90px;height:23.40px;line-height:23.40px;font-family:'DejaVu Sans','Liberation Sans',sans-serif;font-size:15.60px;color:#999;font-weight:normal;white-space:pre;width:40px;text-align:right;-webkit-text-stroke-width:0.2px;">12</div>
<div style="position:absolute;left:613.50px;top:307.40px;height:26.40px;line-height:26.40px;font-family:'Liberation Mono',monospace;font-size:17.60px;color:#000;font-weight:normal;white-space:pre;transform:scaleX(1.193);transform-origin:0 50%;-webkit-text-stroke-width:0.22px;">        <b style="color:#000080">return</b> <b style="color:#008000">"hello world!"</b>;</div>
<div style="position:absolute;left:518.50px;top:330.30px;height:23.40px;line-height:23.40px;font-family:'DejaVu Sans','Liberation Sans',sans-serif;font-size:15.60px;color:#999;font-weight:normal;white-space:pre;width:40px;text-align:right;-webkit-text-stroke-width:0.2px;">13</div>
<div style="position:absolute;left:613.50px;top:328.80px;height:26.40px;line-height:26.40px;font-family:'Liberation Mono',monospace;font-size:17.60px;color:#000;font-weight:normal;white-space:pre;transform:scaleX(1.193);transform-origin:0 50%;-webkit-text-stroke-width:0.22px;">    }</div>
<div style="position:absolute;left:518.50px;top:351.70px;height:23.40px;line-height:23.40px;font-family:'DejaVu Sans','Liberation Sans',sans-serif;font-size:15.60px;color:#999;font-weight:normal;white-space:pre;width:40px;text-align:right;-webkit-text-stroke-width:0.2px;">14</div>
<div style="position:absolute;left:518.50px;top:373.10px;height:23.40px;line-height:23.40px;font-family:'DejaVu Sans','Liberation Sans',sans-serif;font-size:15.60px;color:#999;font-weight:normal;white-space:pre;width:40px;text-align:right;-webkit-text-stroke-width:0.2px;">15</div>
<div style="position:absolute;left:613.50px;top:371.60px;height:26.40px;line-height:26.40px;font-family:'Liberation Mono',monospace;font-size:17.60px;color:#000;font-weight:normal;white-space:pre;transform:scaleX(1.193);transform-origin:0 50%;-webkit-text-stroke-width:0.22px;">}</div>
<div style="position:absolute;left:518.50px;top:394.50px;height:23.40px;line-height:23.40px;font-family:'DejaVu Sans','Liberation Sans',sans-serif;font-size:15.60px;color:#999;font-weight:normal;white-space:pre;width:40px;text-align:right;-webkit-text-stroke-width:0.2px;">16</div>
<div style="position:absolute;left:664.50px;top:309.00px;width:1.00px;height:21.00px;background:#e2e2e2;"></div>
<svg style="position:absolute;left:601.20px;top:122.30px" width="10.00" height="13.00" viewBox="0 0 10 13" ><path d="M0.6 0.6 H9.4 V7.6 L5 12.4 L0.6 7.6 Z" fill="#fff" stroke="#c6c6c6" stroke-width="1"/><path d="M2.8 4.4 H7.2" stroke="#b4b4b4" stroke-width="1"/></svg>
<svg style="position:absolute;left:601.20px;top:141.90px" width="10.00" height="13.00" viewBox="0 0 10 13" ><path d="M0.6 12.4 H9.4 V5.4 L5 0.6 L0.6 5.4 Z" fill="#fff" stroke="#c6c6c6" stroke-width="1"/><path d="M2.8 8.6 H7.2" stroke="#b4b4b4" stroke-width="1"/></svg>
<svg style="position:absolute;left:601.20px;top:186.50px" width="10.00" height="13.00" viewBox="0 0 10 13" ><path d="M0.6 0.6 H9.4 V7.6 L5 12.4 L0.6 7.6 Z" fill="#fff" stroke="#c6c6c6" stroke-width="1"/><path d="M2.8 4.4 H7.2" stroke="#b4b4b4" stroke-width="1"/></svg>
<svg style="position:absolute;left:601.20px;top:206.10px" width="10.00" height="13.00" viewBox="0 0 10 13" ><path d="M0.6 12.4 H9.4 V5.4 L5 0.6 L0.6 5.4 Z" fill="#fff" stroke="#c6c6c6" stroke-width="1"/><path d="M2.8 8.6 H7.2" stroke="#b4b4b4" stroke-width="1"/></svg>
<svg style="position:absolute;left:601.20px;top:293.50px" width="10.00" height="13.00" viewBox="0 0 10 13" ><path d="M0.6 0.6 H9.4 V7.6 L5 12.4 L0.6 7.6 Z" fill="#fff" stroke="#c6c6c6" stroke-width="1"/><path d="M2.8 4.4 H7.2" stroke="#b4b4b4" stroke-width="1"/></svg>
<svg style="position:absolute;left:601.20px;top:334.50px" width="10.00" height="13.00" viewBox="0 0 10 13" ><path d="M0.6 12.4 H9.4 V5.4 L5 0.6 L0.6 5.4 Z" fill="#fff" stroke="#c6c6c6" stroke-width="1"/><path d="M2.8 8.6 H7.2" stroke="#b4b4b4" stroke-width="1"/></svg>
<svg style="position:absolute;left:570.30px;top:225.40px" width="18.00" height="17.00" viewBox="0 0 18 17" ><ellipse cx="7" cy="7" rx="7.6" ry="5.4" transform="rotate(40 7 7)" fill="#36a546"/><path d="M2.6 3.6 C5 5.2 7.4 7.6 8.6 10" stroke="#d8f5d0" stroke-width="1.1" fill="none"/><circle cx="12.6" cy="12" r="4.1" fill="#a8d6f2" stroke="#86c4ea" stroke-width="0.9"/><text x="12.6" y="14.2" font-size="6.2" font-family="DejaVu Sans,sans-serif" text-anchor="middle" fill="#3d5a78">c</text></svg>
</div></div>
<div style="position:absolute;left:6px;top:666px;width:1714px;height:569px;background:#fff;overflow:hidden">
<div style="position:absolute;left:-6px;top:-666px">
<div style="position:absolute;left:6.00px;top:666.00px;width:1714.00px;height:16.50px;background:#ebebeb;"></div>
<div style="position:absolute;left:17.00px;top:666.00px;width:24.00px;height:1.60px;background:#e39a3a;filter:blur(0.5px);opacity:0.85"></div>
<div style="position:absolute;left:60.00px;top:666.00px;width:22.00px;height:1.60px;background:#8fa3b5;filter:blur(0.5px);opacity:0.85"></div>
<div style="position:absolute;left:100.00px;top:666.00px;width:21.00px;height:2.40px;background:#3f8fd0;filter:blur(0.5px);opacity:0.85"></div>
<div style="position:absolute;left:161.00px;top:666.00px;width:4.00px;height:2.50px;background:#9a9a9a;filter:blur(0.5px);opacity:0.85"></div>
<div style="position:absolute;left:204.00px;top:666.00px;width:3.00px;height:1.50px;background:#aaa;filter:blur(0.5px);opacity:0.85"></div>
<div style="position:absolute;left:245.00px;top:666.00px;width:11.00px;height:2.60px;background:#a26fc0;filter:blur(0.5px);opacity:0.85"></div>
<div style="position:absolute;left:258.00px;top:666.00px;width:11.00px;height:2.60px;background:#a26fc0;filter:blur(0.5px);opacity:0.85"></div>
<div style="position:absolute;left:287.00px;top:666.00px;width:18.00px;height:3.40px;background:#3f8fd0;filter:blur(0.5px);opacity:0.85"></div>
<div style="position:absolute;left:306.00px;top:666.00px;width:5.00px;height:1.50px;background:#9ab;filter:blur(0.5px);opacity:0.85"></div>
<div style="position:absolute;left:329.00px;top:666.00px;width:14.00px;height:3.60px;background:#8c8c8c;filter:blur(0.5px);opacity:0.85"></div>
<div style="position:absolute;left:398.00px;top:666.00px;width:7.00px;height:2.40px;background:#777;filter:blur(0.5px);opacity:0.85"></div>
<div style="position:absolute;left:420.00px;top:666.00px;width:13.00px;height:3.40px;background:#555;filter:blur(0.5px);opacity:0.85"></div>
<div style="position:absolute;left:441.00px;top:666.00px;width:6.00px;height:2.20px;background:#777;filter:blur(0.5px);opacity:0.85"></div>
<div style="position:absolute;left:482.00px;top:666.00px;width:6.00px;height:2.60px;background:#4a90d0;filter:blur(0.5px);opacity:0.85"></div>
<div style="position:absolute;left:525.00px;top:666.00px;width:6.00px;height:2.60px;background:#8a8a8a;filter:blur(0.5px);opacity:0.85"></div>
<div style="position:absolute;left:580.00px;top:666.00px;width:11.00px;height:2.00px;background:#777;filter:blur(0.5px);opacity:0.85"></div>
<div style="position:absolute;left:1013.00px;top:666.00px;width:20.00px;height:1.60px;background:#e0453c;filter:blur(0.5px);opacity:0.85"></div>
<div style="position:absolute;left:1069.00px;top:666.00px;width:10.00px;height:4.00px;background:#3f8fd0;filter:blur(0.5px);opacity:0.85"></div>
<div style="position:absolute;left:1112.00px;top:666.00px;width:7.00px;height:4.60px;background:#2f9e44;filter:blur(0.5px);opacity:0.85"></div>
<div style="position:absolute;left:1145.00px;top:666.00px;width:24.00px;height:2.40px;background:#8a8a8a;filter:blur(0.5px);opacity:0.85"></div>
<div style="position:absolute;left:1191.00px;top:666.00px;width:15.00px;height:3.00px;background:#b5b5b5;filter:blur(0.5px);opacity:0.85"></div>
<div style="position:absolute;left:1230.00px;top:666.00px;width:20.00px;height:2.60px;background:#8a8a8a;filter:blur(0.5px);opacity:0.85"></div>
<div style="position:absolute;left:848.00px;top:666.00px;width:20.00px;height:2.60px;background:#6f8f6f;filter:blur(0.5px);opacity:0.85"></div>
<div style="position:absolute;left:886.00px;top:666.00px;width:16.00px;height:2.40px;background:#888;filter:blur(0.5px);opacity:0.85"></div>
<div style="position:absolute;left:930.00px;top:666.00px;width:16.00px;height:1.60px;background:#777;filter:blur(0.5px);opacity:0.85"></div>
<div style="position:absolute;left:975.00px;top:666.00px;width:12.00px;height:1.80px;background:#888;filter:blur(0.5px);opacity:0.85"></div>
<div style="position:absolute;left:1284.00px;top:666.00px;width:9.00px;height:2.60px;background:#888;filter:blur(0.5px);opacity:0.85"></div>
<div style="position:absolute;left:1322.00px;top:666.00px;width:24.00px;height:3.60px;background:#3f8fd0;filter:blur(0.5px);opacity:0.85"></div>
<div style="position:absolute;left:1372.00px;top:666.00px;width:27.00px;height:4.40px;background:#9a9a9a;filter:blur(0.5px);opacity:0.85"></div>
<div style="position:absolute;left:1418.00px;top:666.00px;width:18.00px;height:2.60px;background:#9a9a9a;filter:blur(0.5px);opacity:0.85"></div>
<div style="position:absolute;left:1464.00px;top:666.00px;width:9.00px;height:3.00px;background:#999;filter:blur(0.5px);opacity:0.85"></div>
<div style="position:absolute;left:1514.00px;top:666.00px;width:8.00px;height:2.40px;background:#4a8fc0;filter:blur(0.5px);opacity:0.85"></div>
<div style="position:absolute;left:1561.00px;top:666.00px;width:8.00px;height:3.00px;background:#4d4aa5;filter:blur(0.5px);opacity:0.85"></div>
<div style="position:absolute;left:1569.00px;top:666.00px;width:8.00px;height:2.40px;background:#cfcfcf;filter:blur(0.5px);opacity:0.85"></div>
<div style="position:absolute;left:1600.00px;top:666.00px;width:18.00px;height:4.40px;background:#777;filter:blur(0.5px);opacity:0.85"></div>
<div style="position:absolute;left:1652.00px;top:666.00px;width:24.00px;height:2.60px;background:#46b94a;filter:blur(0.5px);opacity:0.85"></div>
<div style="position:absolute;left:1697.00px;top:666.00px;width:20.00px;height:3.60px;background:#2f8fe0;filter:blur(0.5px);opacity:0.85"></div>
<div style="position:absolute;left:139.00px;top:667.00px;width:1.30px;height:9.50px;background:repeating-linear-gradient(#777 0 1.3px,transparent 1.3px 4.6px);"></div>
<div style="position:absolute;left:232.00px;top:667.00px;width:1.30px;height:9.50px;background:repeating-linear-gradient(#777 0 1.3px,transparent 1.3px 4.6px);"></div>
<div style="position:absolute;left:367.00px;top:667.00px;width:1.30px;height:9.50px;background:repeating-linear-gradient(#777 0 1.3px,transparent 1.3px 4.6px);"></div>
<div style="position:absolute;left:459.00px;top:667.00px;width:1.30px;height:9.50px;background:repeating-linear-gradient(#777 0 1.3px,transparent 1.3px 4.6px);"></div>
<div style="position:absolute;left:552.00px;top:667.00px;width:1.30px;height:9.50px;background:repeating-linear-gradient(#777 0 1.3px,transparent 1.3px 4.6px);"></div>
<div style="position:absolute;left:1049.00px;top:667.00px;width:1.30px;height:9.50px;background:repeating-linear-gradient(#777 0 1.3px,transparent 1.3px 4.6px);"></div>
<div style="position:absolute;left:1267.00px;top:667.00px;width:1.30px;height:9.50px;background:repeating-linear-gradient(#777 0 1.3px,transparent 1.3px 4.6px);"></div>
<div style="position:absolute;left:1360.00px;top:667.00px;width:1.30px;height:9.50px;background:repeating-linear-gradient(#777 0 1.3px,transparent 1.3px 4.6px);"></div>
<div style="position:absolute;left:1495.00px;top:667.00px;width:1.30px;height:9.50px;background:repeating-linear-gradient(#777 0 1.3px,transparent 1.3px 4.6px);"></div>
<div style="position:absolute;left:1589.00px;top:667.00px;width:1.30px;height:9.50px;background:repeating-linear-gradient(#777 0 1.3px,transparent 1.3px 4.6px);"></div>
<div style="position:absolute;left:1640.00px;top:667.00px;width:1.30px;height:9.50px;background:repeating-linear-gradient(#777 0 1.3px,transparent 1.3px 4.6px);"></div>
<div style="position:absolute;left:604.00px;top:660.00px;width:224.00px;height:12.00px;background:#fff;border:1px solid #b5b5b5;border-radius:5px;box-sizing:border-box"></div>
<div style="position:absolute;left:631.00px;top:666.00px;width:5.00px;height:3.40px;background:#27c12b;border-radius:2px"></div>
<div style="position:absolute;left:624.00px;top:666.00px;width:8.00px;height:2.00px;background:#666;"></div>
<div style="position:absolute;left:712.00px;top:666.00px;width:1.50px;height:1.50px;background:#222;"></div>
<div style="position:absolute;left:725.00px;top:666.00px;width:1.50px;height:1.50px;background:#222;"></div>
<div style="position:absolute;left:6.00px;top:682.50px;width:1714.00px;height:39.00px;background:#d8d8d8;border-top:1px solid #c3c3c3;border-bottom:1px solid #bcbcbc;box-sizing:border-box"></div>
<div style="position:absolute;left:6.00px;top:683.50px;width:620.00px;height:37.00px;background:linear-gradient(#e2e2e2,#dcdcdc);"></div>
<svg style="position:absolute;left:21.00px;top:691.60px" width="24.84" height="22.08" viewBox="0 0 18 16" overflow="visible"><path d="M0.4 0.5 H7.2 L9 3.2 H17.8 V15.3 H0.4 Z" fill="#c6a06c"/><rect x="2.75" y="5.5" width="12.7" height="7.45" fill="#dfdfdf"/><rect x="10.6" y="8.6" width="7.4" height="7.4" fill="#dfdfdf"/><rect x="11.6" y="9.6" width="6.4" height="6.4" fill="#4f9fd6"/></svg>
<div style="position:absolute;left:53.00px;top:690.00px;height:26.40px;line-height:26.40px;font-family:'DejaVu Sans','Liberation Sans',sans-serif;font-size:17.60px;color:#1e1e1e;font-weight:bold;white-space:pre;letter-spacing:-0.06em;-webkit-text-stroke-width:0.3px;">demo</div>
<svg style="position:absolute;left:107.00px;top:683.00px" width="12.00" height="38.00" viewBox="0 0 12 38" ><path d="M0 0 L11 19 L0 38" fill="none" stroke="#b7b7b7" stroke-width="1.4"/></svg>
<svg style="position:absolute;left:127.00px;top:691.60px" width="24.84" height="22.08" viewBox="0 0 18 16" overflow="visible"><path d="M0.4 0.5 H7.2 L9 3.2 H17.8 V15.3 H0.4 Z" fill="#c6a06c"/><rect x="2.75" y="5.5" width="12.7" height="7.45" fill="#dfdfdf"/></svg>
<div style="position:absolute;left:158.00px;top:690.00px;height:26.40px;line-height:26.40px;font-family:'DejaVu Sans','Liberation Sans',sans-serif;font-size:17.60px;color:#2a2a2a;font-weight:normal;white-space:pre;-webkit-text-stroke-width:0.3px;">src</div>
<svg style="position:absolute;left:188.00px;top:683.00px" width="12.00" height="38.00" viewBox="0 0 12 38" ><path d="M0 0 L11 19 L0 38" fill="none" stroke="#b7b7b7" stroke-width="1.4"/></svg>
<svg style="position:absolute;left:208.00px;top:691.60px" width="24.84" height="22.08" viewBox="0 0 18 16" overflow="visible"><path d="M0.4 0.5 H7.2 L9 3.2 H17.8 V15.3 H0.4 Z" fill="#c6a06c"/><rect x="2.75" y="5.5" width="12.7" height="7.45" fill="#dfdfdf"/></svg>
<div style="position:absolute;left:239.00px;top:690.00px;height:26.40px;line-height:26.40px;font-family:'DejaVu Sans','Liberation Sans',sans-serif;font-size:17.60px;color:#2a2a2a;font-weight:normal;white-space:pre;-webkit-text-stroke-width:0.3px;">main</div>
<svg style="position:absolute;left:284.00px;top:683.00px" width="12.00" height="38.00" viewBox="0 0 12 38" ><path d="M0 0 L11 19 L0 38" fill="none" stroke="#b7b7b7" stroke-width="1.4"/></svg>
<svg style="position:absolute;left:304.00px;top:691.60px" width="24.84" height="22.08" viewBox="0 0 18 16" overflow="visible"><path d="M0.4 0.5 H7.2 L9 3.2 H17.8 V15.3 H0.4 Z" fill="#c6a06c"/><rect x="2.75" y="5.5" width="12.7" height="7.45" fill="#dfdfdf"/><rect x="10.6" y="7.9" width="7.6" height="8.6" fill="#dfdfdf"/><rect x="11.4" y="8.6" width="6.8" height="2.1" rx="0.6" fill="#eaa428"/><rect x="11.4" y="11.3" width="6.8" height="2.1" rx="0.6" fill="#eaa428"/><rect x="11.4" y="14" width="6.8" height="2.1" rx="0.6" fill="#eaa428"/><path d="M11.4 11 H18.2 M11.4 13.7 H18.2" stroke="#b97d12" stroke-width="0.5"/></svg>
<div style="position:absolute;left:336.00px;top:690.00px;height:26.40px;line-height:26.40px;font-family:'DejaVu Sans','Liberation Sans',sans-serif;font-size:17.60px;color:#2a2a2a;font-weight:normal;white-space:pre;-webkit-text-stroke-width:0.3px;">resources</div>
<svg style="position:absolute;left:427.00px;top:683.00px" width="12.00" height="38.00" viewBox="0 0 12 38" ><path d="M0 0 L11 19 L0 38" fill="none" stroke="#b7b7b7" stroke-width="1.4"/></svg>
<svg style="position:absolute;left:448.00px;top:692.93px" width="23.40" height="20.80" viewBox="0 0 18 16" overflow="visible"><path d="M17.6 -0.9 C18.8 3 18.9 8 16.6 11.5 C14 15 8 15.6 4.2 14.5 L1.3 15.2 C-0.6 11 0.6 6.5 4.5 4.6 C8.5 2.8 13.5 3.4 17.6 -0.9 Z" fill="#36b34a"/><polygon points="19.40,12.20 16.60,17.05 11.00,17.05 8.20,12.20 11.00,7.35 16.60,7.35" fill="#62666a" stroke="#62666a" stroke-width="0.8" stroke-linejoin="round"/><path d="M12.10 10.20 A2.7 2.7 0 1 0 15.50 10.20" fill="none" stroke="#e9e9e9" stroke-width="1"/><path d="M13.80 8.80 V12.00" stroke="#e9e9e9" stroke-width="1"/></svg>
<div style="position:absolute;left:479.00px;top:690.00px;height:26.40px;line-height:26.40px;font-family:'DejaVu Sans','Liberation Sans',sans-serif;font-size:17.60px;color:#9c3b1c;font-weight:normal;white-space:pre;-webkit-text-stroke-width:0.3px;">application.yml</div>
<svg style="position:absolute;left:616.00px;top:683.00px" width="12.00" height="38.00" viewBox="0 0 12 38" ><path d="M0 0 L11 19 L0 38" fill="none" stroke="#b7b7b7" stroke-width="1.4"/></svg>
<div style="position:absolute;left:6.00px;top:721.50px;width:34.00px;height:514.00px;background:#ececec;border-right:1px solid #c6c6c6;box-sizing:border-box"></div>
<div style="position:absolute;left:6.00px;top:721.50px;width:33.00px;height:145.50px;background:#b5b5b5;"></div>
<div style="position:absolute;left:23.0px;top:821.0px;transform:rotate(-90deg) translateY(-50%);transform-origin:0 0;font-family:'DejaVu Sans',sans-serif;font-size:17.5px;line-height:24.5px;color:#1e1e1e;white-space:pre"><span style="text-decoration:underline">1</span>: Project</div>
<div style="position:absolute;left:23.0px;top:991.0px;transform:rotate(-90deg) translateY(-50%);transform-origin:0 0;font-family:'DejaVu Sans',sans-serif;font-size:17.5px;line-height:24.5px;color:#1e1e1e;white-space:pre"><span style="text-decoration:underline">7</span>: Structure</div>
<svg style="position:absolute;left:10.50px;top:826.00px" width="25.00" height="25.00" viewBox="0 0 18 18" overflow="visible"><path d="M0.5 1 H7 L8.8 3.4 H17.6 V15 H0.5 Z" fill="#c6a06c"/><rect x="2.5" y="5.3" width="13.1" height="7.7" fill="#b5b5b5"/><rect x="8.6" y="7.6" width="9.6" height="9" fill="#4a4a4a"/><rect x="10" y="13.4" width="3.4" height="1.2" fill="#ddd"/></svg>
<svg style="position:absolute;left:11.50px;top:996.00px" width="24.00" height="24.00" viewBox="0 0 18 18" overflow="visible"><path d="M4 4 L14 4 L9 14 Z" fill="none" stroke="#6b6b6b" stroke-width="1.4"/><circle cx="4" cy="4" r="3.2" fill="#5aa1d8"/><circle cx="14" cy="4" r="3.2" fill="#e0605a"/><circle cx="9" cy="14" r="3.2" fill="#d49a52"/></svg>
<div style="position:absolute;left:40.00px;top:722.00px;width:680.00px;height:38.15px;background:linear-gradient(#ececec,#dddddd);border-bottom:1px solid #c4c4c4;box-sizing:border-box"></div>
<svg style="position:absolute;left:57.36px;top:730.81px" width="24.99" height="19.73" viewBox="0 0 19 15" ><rect x="6" y="0.8" width="12" height="9.4" fill="#bfe0f6" stroke="#5b9fd0" stroke-width="1.2"/><rect x="6" y="0.4" width="12" height="2" fill="#5b9fd0"/><rect x="1" y="4" width="8.4" height="10.4" fill="#dcdcdc" stroke="#7a7a7a" stroke-width="2"/><rect x="3.4" y="6.8" width="3.6" height="1" fill="#777"/><rect x="3.4" y="8.8" width="3.6" height="1" fill="#777"/><rect x="3.4" y="10.8" width="3.6" height="1" fill="#777"/></svg>
<div style="position:absolute;left:89.20px;top:728.86px;height:26.78px;line-height:26.78px;font-family:'DejaVu Sans','Liberation Sans',sans-serif;font-size:17.85px;color:#555;font-weight:normal;white-space:pre;-webkit-text-stroke-width:0.3px;">Project</div>
<svg style="position:absolute;left:370.85px;top:738.31px" width="11.84" height="6.58" viewBox="0 0 9 5" ><path d="M0 0 H9 L4.5 5 Z" fill="#666"/></svg>
<div style="position:absolute;left:393.87px;top:722.00px;width:1.00px;height:37.15px;background:#c9c9c9;border-right:1px solid #f3f3f3"></div>
<svg style="position:absolute;left:556.63px;top:731.08px" width="21.05" height="21.05" viewBox="0 0 16 16" ><circle cx="8" cy="8" r="6.5" fill="none" stroke="#727272" stroke-width="2"/><path d="M8 1 V5.6 M8 10.4 V15 M1 8 H5.6 M10.4 8 H15" stroke="#727272" stroke-width="2"/></svg>
<svg style="position:absolute;left:591.36px;top:730.42px" width="21.05" height="21.84" viewBox="0 0 16 16.6" ><path d="M1.6 7 H15.6 M1.6 9.6 H15.6" stroke="#858585" stroke-width="1.2"/><path d="M8 0 V5.6 M5.6 3.6 L8 6 L10.4 3.6 M8 16.6 V11 M5.6 13 L8 10.6 L10.4 13" stroke="#727272" stroke-width="1.5" fill="none"/></svg>
<div style="position:absolute;left:626.88px;top:728.58px;width:1.00px;height:23.68px;background:#c9c9c9;"></div>
<svg style="position:absolute;left:641.35px;top:730.95px" width="21.05" height="21.05" viewBox="0 0 16 16" ><rect x="6.7" y="0" width="2.6" height="16" fill="#6e6e6e" transform="rotate(0 8 8)"/><rect x="6.7" y="0" width="2.6" height="16" fill="#6e6e6e" transform="rotate(45 8 8)"/><rect x="6.7" y="0" width="2.6" height="16" fill="#6e6e6e" transform="rotate(90 8 8)"/><rect x="6.7" y="0" width="2.6" height="16" fill="#6e6e6e" transform="rotate(135 8 8)"/><circle cx="8" cy="8" r="5.4" fill="#6e6e6e"/><circle cx="8" cy="8" r="2.3" fill="#e4e4e4"/></svg>
<svg style="position:absolute;left:664.51px;top:739.63px" width="7.89" height="4.74" viewBox="0 0 6 3.6" ><path d="M0 0 H6 L3 3.6 Z" fill="#6e6e6e"/></svg>
<svg style="position:absolute;left:688.18px;top:730.68px" width="19.73" height="21.05" viewBox="0 0 15 16" ><rect x="0.6" y="0.6" width="2.8" height="14.4" fill="#9a9a9a" stroke="#6e6e6e" stroke-width="1.2"/><path d="M6.4 5.6 H14.4 M6.4 5.6 L9.2 3 M6.4 5.6 L9.2 8.2" stroke="#6e6e6e" stroke-width="1.5" fill="none"/></svg>
<svg style="position:absolute;left:45.79px;top:771.12px" width="15.26" height="13.42" viewBox="0 0 11.6 10.2" ><path d="M0 0 H11.6 L5.8 10.2 Z" fill="#a3a3a3"/></svg>
<svg style="position:absolute;left:79.47px;top:765.59px" width="23.68" height="21.05" viewBox="0 0 18 16" overflow="visible"><path d="M0.4 0.5 H7.2 L9 3.2 H17.8 V15.3 H0.4 Z" fill="#c6a06c"/><rect x="2.75" y="5.5" width="12.7" height="7.45" fill="#fff"/><rect x="10.6" y="8.6" width="7.4" height="7.4" fill="#fff"/><rect x="11.6" y="9.6" width="6.4" height="6.4" fill="#4f9fd6"/></svg>
<div style="position:absolute;left:108.41px;top:761.50px;height:30.98px;line-height:30.98px;font-family:'DejaVu Sans','Liberation Sans',sans-serif;font-size:20.65px;color:#9c3b1c;font-weight:normal;white-space:pre;-webkit-text-stroke-width:0.3px;"><b style="letter-spacing:-0.02em">demo</b><span style="color:#8a8a8a;font-weight:normal;letter-spacing:0.66px;margin-left:2.91px"> ~/workspace/ship/demo</span></div>
<svg style="position:absolute;left:81.44px;top:800.06px" width="12.89" height="15.26" viewBox="0 0 9.8 11.6" ><path d="M0 0 V11.6 L9.8 5.8 Z" fill="#a3a3a3"/></svg>
<svg style="position:absolute;left:112.75px;top:797.17px" width="23.68" height="21.05" viewBox="0 0 18 16" overflow="visible"><path d="M0.4 0.5 H7.2 L9 3.2 H17.8 V15.3 H0.4 Z" fill="#c6a06c"/><rect x="2.75" y="5.5" width="12.7" height="7.45" fill="#fff"/></svg>
<div style="position:absolute;left:141.69px;top:793.07px;height:30.98px;line-height:30.98px;font-family:'DejaVu Sans','Liberation Sans',sans-serif;font-size:20.65px;color:#9c3b1c;font-weight:normal;white-space:pre;letter-spacing:0.0px;-webkit-text-stroke-width:0.3px;">.idea</div>
<svg style="position:absolute;left:81.44px;top:831.63px" width="12.89" height="15.26" viewBox="0 0 9.8 11.6" ><path d="M0 0 V11.6 L9.8 5.8 Z" fill="#a3a3a3"/></svg>
<svg style="position:absolute;left:112.75px;top:828.74px" width="23.68" height="21.05" viewBox="0 0 18 16" overflow="visible"><path d="M0.4 0.5 H7.2 L9 3.2 H17.8 V15.3 H0.4 Z" fill="#c6a06c"/><rect x="2.75" y="5.5" width="12.7" height="7.45" fill="#fff"/></svg>
<div style="position:absolute;left:141.69px;top:824.64px;height:30.98px;line-height:30.98px;font-family:'DejaVu Sans','Liberation Sans',sans-serif;font-size:20.65px;color:#9c3b1c;font-weight:normal;white-space:pre;letter-spacing:0.0px;-webkit-text-stroke-width:0.3px;">.mvn</div>
<svg style="position:absolute;left:79.07px;top:865.83px" width="15.26" height="13.42" viewBox="0 0 11.6 10.2" ><path d="M0 0 H11.6 L5.8 10.2 Z" fill="#a3a3a3"/></svg>
<svg style="position:absolute;left:112.75px;top:860.31px" width="23.68" height="21.05" viewBox="0 0 18 16" overflow="visible"><path d="M0.4 0.5 H7.2 L9 3.2 H17.8 V15.3 H0.4 Z" fill="#c6a06c"/><rect x="2.75" y="5.5" width="12.7" height="7.45" fill="#fff"/></svg>
<div style="position:absolute;left:141.69px;top:856.21px;height:30.98px;line-height:30.98px;font-family:'DejaVu Sans','Liberation Sans',sans-serif;font-size:20.65px;color:#9c3b1c;font-weight:normal;white-space:pre;letter-spacing:0.0px;-webkit-text-stroke-width:0.3px;">src</div>
<svg style="position:absolute;left:112.35px;top:897.41px" width="15.26" height="13.42" viewBox="0 0 11.6 10.2" ><path d="M0 0 H11.6 L5.8 10.2 Z" fill="#a3a3a3"/></svg>
<svg style="position:absolute;left:146.03px;top:891.88px" width="23.68" height="21.05" viewBox="0 0 18 16" overflow="visible"><path d="M0.4 0.5 H7.2 L9 3.2 H17.8 V15.3 H0.4 Z" fill="#c6a06c"/><rect x="2.75" y="5.5" width="12.7" height="7.45" fill="#fff"/></svg>
<div style="position:absolute;left:174.97px;top:887.78px;height:30.98px;line-height:30.98px;font-family:'DejaVu Sans','Liberation Sans',sans-serif;font-size:20.65px;color:#9c3b1c;font-weight:normal;white-space:pre;letter-spacing:0.0px;-webkit-text-stroke-width:0.3px;">main</div>
<svg style="position:absolute;left:145.63px;top:928.98px" width="15.26" height="13.42" viewBox="0 0 11.6 10.2" ><path d="M0 0 H11.6 L5.8 10.2 Z" fill="#a3a3a3"/></svg>
<svg style="position:absolute;left:179.31px;top:923.45px" width="23.68" height="21.05" viewBox="0 0 18 16" overflow="visible"><path d="M0.4 0.5 H7.2 L9 3.2 H17.8 V15.3 H0.4 Z" fill="#639fce"/><rect x="2.75" y="5.5" width="12.7" height="7.45" fill="#fff"/></svg>
<div style="position:absolute;left:208.25px;top:919.36px;height:30.98px;line-height:30.98px;font-family:'DejaVu Sans','Liberation Sans',sans-serif;font-size:20.65px;color:#9c3b1c;font-weight:normal;white-space:pre;letter-spacing:0.0px;-webkit-text-stroke-width:0.3px;">java</div>
<svg style="position:absolute;left:178.92px;top:960.55px" width="15.26" height="13.42" viewBox="0 0 11.6 10.2" ><path d="M0 0 H11.6 L5.8 10.2 Z" fill="#a3a3a3"/></svg>
<svg style="position:absolute;left:212.59px;top:955.03px" width="23.68" height="21.05" viewBox="0 0 18 16" overflow="visible"><path d="M0.4 0.5 H7.2 L9 3.2 H17.8 V15.3 H0.4 Z" fill="#c6a06c"/><rect x="2.75" y="5.5" width="12.7" height="7.45" fill="#fff"/><circle cx="6.9" cy="9.3" r="2.4" fill="#69a6d6" stroke="#d6e8f6" stroke-width="1.1"/></svg>
<div style="position:absolute;left:241.53px;top:950.93px;height:30.98px;line-height:30.98px;font-family:'DejaVu Sans','Liberation Sans',sans-serif;font-size:20.65px;color:#9c3b1c;font-weight:normal;white-space:pre;letter-spacing:0.0px;-webkit-text-stroke-width:0.3px;">com.example.demo</div>
<svg style="position:absolute;left:212.20px;top:992.12px" width="15.26" height="13.42" viewBox="0 0 11.6 10.2" ><path d="M0 0 H11.6 L5.8 10.2 Z" fill="#a3a3a3"/></svg>
<svg style="position:absolute;left:245.88px;top:986.60px" width="23.68" height="21.05" viewBox="0 0 18 16" overflow="visible"><path d="M0.4 0.5 H7.2 L9 3.2 H17.8 V15.3 H0.4 Z" fill="#c6a06c"/><rect x="2.75" y="5.5" width="12.7" height="7.45" fill="#fff"/><circle cx="6.9" cy="9.3" r="2.4" fill="#69a6d6" stroke="#d6e8f6" stroke-width="1.1"/></svg>
<div style="position:absolute;left:274.82px;top:982.50px;height:30.98px;line-height:30.98px;font-family:'DejaVu Sans','Liberation Sans',sans-serif;font-size:20.65px;color:#9c3b1c;font-weight:normal;white-space:pre;letter-spacing:0.0px;-webkit-text-stroke-width:0.3px;">controller</div>
<svg style="position:absolute;left:280.47px;top:1018.17px" width="23.68" height="21.05" viewBox="0 0 18 16" overflow="visible"><circle cx="9" cy="7.9" r="8.1" fill="#abd9f5" stroke="#85bde3" stroke-width="1.1"/><text x="9.2" y="11.8" font-family="DejaVu Sans, sans-serif" font-size="10.8" text-anchor="middle" fill="#3d5268">C</text></svg>
<svg style="position:absolute;left:310.47px;top:1020.41px" width="17.10" height="17.10" viewBox="0 0 13 13" ><path d="M1.4 6.4 V3.8 A2.7 2.7 0 0 1 6.6 3.2" fill="none" stroke="#5cb85f" stroke-width="1.5"/><rect x="2.9" y="5.3" width="8.7" height="6.8" rx="1.3" fill="#5cb85f"/><rect x="5.6" y="7.3" width="3.4" height="1.2" fill="#fff"/><rect x="6.7" y="7.3" width="1.2" height="3.3" fill="#fff"/></svg>
<div style="position:absolute;left:336.38px;top:1014.07px;height:30.98px;line-height:30.98px;font-family:'DejaVu Sans','Liberation Sans',sans-serif;font-size:20.65px;color:#9c3b1c;font-weight:normal;white-space:pre;letter-spacing:0.0px;-webkit-text-stroke-width:0.3px;">DemoController</div>
<svg style="position:absolute;left:247.19px;top:1049.74px" width="23.68" height="21.05" viewBox="0 0 18 16" overflow="visible"><circle cx="8.4" cy="7.9" r="7.8" fill="#abd9f5" stroke="#85bde3" stroke-width="1.1"/><text x="7.6" y="11.6" font-family="DejaVu Sans, sans-serif" font-size="10.4" text-anchor="middle" fill="#3d5268">C</text><path d="M12.5 -2 L18.6 2.2 L12.5 6.4 Z" fill="#2fa84a"/><polygon points="18.90,12.70 16.10,17.55 10.50,17.55 7.70,12.70 10.50,7.85 16.10,7.85" fill="#62666a" stroke="#62666a" stroke-width="0.8" stroke-linejoin="round"/><path d="M11.60 10.70 A2.7 2.7 0 1 0 15.00 10.70" fill="none" stroke="#e9e9e9" stroke-width="1"/><path d="M13.30 9.30 V12.50" stroke="#e9e9e9" stroke-width="1"/></svg>
<svg style="position:absolute;left:277.18px;top:1051.98px" width="17.10" height="17.10" viewBox="0 0 13 13" ><path d="M1.4 6.4 V3.8 A2.7 2.7 0 0 1 6.6 3.2" fill="none" stroke="#5cb85f" stroke-width="1.5"/><rect x="2.9" y="5.3" width="8.7" height="6.8" rx="1.3" fill="#5cb85f"/><rect x="5.6" y="7.3" width="3.4" height="1.2" fill="#fff"/><rect x="6.7" y="7.3" width="1.2" height="3.3" fill="#fff"/></svg>
<div style="position:absolute;left:303.10px;top:1045.64px;height:30.98px;line-height:30.98px;font-family:'DejaVu Sans','Liberation Sans',sans-serif;font-size:20.65px;color:#9c3b1c;font-weight:normal;white-space:pre;letter-spacing:0.0px;-webkit-text-stroke-width:0.3px;">DemoApplication</div>
<svg style="position:absolute;left:145.63px;top:1086.84px" width="15.26" height="13.42" viewBox="0 0 11.6 10.2" ><path d="M0 0 H11.6 L5.8 10.2 Z" fill="#a3a3a3"/></svg>
<svg style="position:absolute;left:179.31px;top:1081.31px" width="23.68" height="21.05" viewBox="0 0 18 16" overflow="visible"><path d="M0.4 0.5 H7.2 L9 3.2 H17.8 V15.3 H0.4 Z" fill="#c6a06c"/><rect x="2.75" y="5.5" width="12.7" height="7.45" fill="#fff"/><rect x="10.6" y="7.9" width="7.6" height="8.6" fill="#fff"/><rect x="11.4" y="8.6" width="6.8" height="2.1" rx="0.6" fill="#eaa428"/><rect x="11.4" y="11.3" width="6.8" height="2.1" rx="0.6" fill="#eaa428"/><rect x="11.4" y="14" width="6.8" height="2.1" rx="0.6" fill="#eaa428"/><path d="M11.4 11 H18.2 M11.4 13.7 H18.2" stroke="#b97d12" stroke-width="0.5"/></svg>
<div style="position:absolute;left:208.25px;top:1077.22px;height:30.98px;line-height:30.98px;font-family:'DejaVu Sans','Liberation Sans',sans-serif;font-size:20.65px;color:#9c3b1c;font-weight:normal;white-space:pre;letter-spacing:0.0px;-webkit-text-stroke-width:0.3px;">resources</div>
<svg style="position:absolute;left:212.59px;top:1112.89px" width="23.68" height="21.05" viewBox="0 0 18 16" overflow="visible"><path d="M0.4 0.5 H7.2 L9 3.2 H17.8 V15.3 H0.4 Z" fill="#c6a06c"/><rect x="2.75" y="5.5" width="12.7" height="7.45" fill="#fff"/><circle cx="6.9" cy="9.3" r="2.4" fill="#69a6d6" stroke="#d6e8f6" stroke-width="1.1"/></svg>
<div style="position:absolute;left:241.53px;top:1108.79px;height:30.98px;line-height:30.98px;font-family:'DejaVu Sans','Liberation Sans',sans-serif;font-size:20.65px;color:#9c3b1c;font-weight:normal;white-space:pre;letter-spacing:0.0px;-webkit-text-stroke-width:0.3px;">static</div>
<svg style="position:absolute;left:212.59px;top:1144.46px" width="23.68" height="21.05" viewBox="0 0 18 16" overflow="visible"><path d="M0.4 0.5 H7.2 L9 3.2 H17.8 V15.3 H0.4 Z" fill="#c6a06c"/><rect x="2.75" y="5.5" width="12.7" height="7.45" fill="#fff"/><circle cx="6.9" cy="9.3" r="2.4" fill="#69a6d6" stroke="#d6e8f6" stroke-width="1.1"/></svg>
<div style="position:absolute;left:241.53px;top:1140.36px;height:30.98px;line-height:30.98px;font-family:'DejaVu Sans','Liberation Sans',sans-serif;font-size:20.65px;color:#9c3b1c;font-weight:normal;white-space:pre;letter-spacing:0.0px;-webkit-text-stroke-width:0.3px;">templates</div>
<div style="position:absolute;left:40.00px;top:1170.64px;width:680.00px;height:31.05px;background:#d4d4d4;"></div>
<svg style="position:absolute;left:212.59px;top:1176.03px" width="23.68" height="21.05" viewBox="0 0 18 16" overflow="visible"><path d="M17.6 -0.9 C18.8 3 18.9 8 16.6 11.5 C14 15 8 15.6 4.2 14.5 L1.3 15.2 C-0.6 11 0.6 6.5 4.5 4.6 C8.5 2.8 13.5 3.4 17.6 -0.9 Z" fill="#36b34a"/><polygon points="19.40,12.20 16.60,17.05 11.00,17.05 8.20,12.20 11.00,7.35 16.60,7.35" fill="#62666a" stroke="#62666a" stroke-width="0.8" stroke-linejoin="round"/><path d="M12.10 10.20 A2.7 2.7 0 1 0 15.50 10.20" fill="none" stroke="#e9e9e9" stroke-width="1"/><path d="M13.80 8.80 V12.00" stroke="#e9e9e9" stroke-width="1"/></svg>
<div style="position:absolute;left:241.53px;top:1171.93px;height:30.98px;line-height:30.98px;font-family:'DejaVu Sans','Liberation Sans',sans-serif;font-size:20.65px;color:#1e1e1e;font-weight:normal;white-space:pre;letter-spacing:0.0px;-webkit-text-stroke-width:0.3px;">application.yml</div>
<svg style="position:absolute;left:114.72px;top:1210.50px" width="12.89" height="15.26" viewBox="0 0 9.8 11.6" ><path d="M0 0 V11.6 L9.8 5.8 Z" fill="#a3a3a3"/></svg>
<svg style="position:absolute;left:146.03px;top:1207.60px" width="23.68" height="21.05" viewBox="0 0 18 16" overflow="visible"><path d="M0.4 0.5 H7.2 L9 3.2 H17.8 V15.3 H0.4 Z" fill="#c6a06c"/><rect x="2.75" y="5.5" width="12.7" height="7.45" fill="#fff"/></svg>
<div style="position:absolute;left:174.97px;top:1203.50px;height:30.98px;line-height:30.98px;font-family:'DejaVu Sans','Liberation Sans',sans-serif;font-size:20.65px;color:#9c3b1c;font-weight:normal;white-space:pre;letter-spacing:0.0px;-webkit-text-stroke-width:0.3px;">test</div>
<div style="position:absolute;left:720.00px;top:722.00px;width:1.00px;height:513.00px;background:#b9b9b9;"></div>
<div style="position:absolute;left:721.00px;top:722.00px;width:999.00px;height:38.15px;background:#ececec;"></div>
<div style="position:absolute;left:721.00px;top:722.00px;width:277.00px;height:38.15px;background:#d8d8d8;border-right:1px solid #cbcbcb;box-sizing:border-box"></div>
<svg style="position:absolute;left:737.00px;top:730.02px" width="23.68" height="21.05" viewBox="0 0 18 16" overflow="visible"><circle cx="8.4" cy="7.9" r="7.8" fill="#abd9f5" stroke="#85bde3" stroke-width="1.1"/><text x="7.6" y="11.6" font-family="DejaVu Sans, sans-serif" font-size="10.4" text-anchor="middle" fill="#3d5268">C</text><path d="M12.5 -2 L18.6 2.2 L12.5 6.4 Z" fill="#2fa84a"/><polygon points="18.90,12.70 16.10,17.55 10.50,17.55 7.70,12.70 10.50,7.85 16.10,7.85" fill="#62666a" stroke="#62666a" stroke-width="0.8" stroke-linejoin="round"/><path d="M11.60 10.70 A2.7 2.7 0 1 0 15.00 10.70" fill="none" stroke="#e9e9e9" stroke-width="1"/><path d="M13.30 9.30 V12.50" stroke="#e9e9e9" stroke-width="1"/></svg>
<div style="position:absolute;left:767.00px;top:728.74px;height:26.25px;line-height:26.25px;font-family:'DejaVu Sans','Liberation Sans',sans-serif;font-size:17.50px;color:#c06a4c;font-weight:normal;white-space:pre;-webkit-text-stroke-width:0.15px;">DemoApplication.java</div>
<svg style="position:absolute;left:971.08px;top:735.42px" width="11.84" height="11.84" viewBox="0 0 9 9" ><path d="M1 1 L8 8 M8 1 L1 8" stroke="#6b6b6b" stroke-width="1.9"/></svg>
<div style="position:absolute;left:998.00px;top:722.00px;width:133.00px;height:38.15px;background:#d8d8d8;border-right:1px solid #cbcbcb;box-sizing:border-box"></div>
<svg style="position:absolute;left:1014.00px;top:730.02px" width="23.68" height="21.05" viewBox="0 0 18 16" overflow="visible"><text x="0.2" y="13" font-family="DejaVu Sans, sans-serif" font-size="19" font-weight="bold" font-style="italic" fill="#5a90ba" textLength="17.6" lengthAdjust="spacingAndGlyphs">m</text></svg>
<div style="position:absolute;left:1043.00px;top:728.74px;height:26.25px;line-height:26.25px;font-family:'DejaVu Sans','Liberation Sans',sans-serif;font-size:17.50px;color:#c06a4c;font-weight:normal;white-space:pre;-webkit-text-stroke-width:0.15px;">demo</div>
<svg style="position:absolute;left:1104.08px;top:735.42px" width="11.84" height="11.84" viewBox="0 0 9 9" ><path d="M1 1 L8 8 M8 1 L1 8" stroke="#6b6b6b" stroke-width="1.9"/></svg>
<div style="position:absolute;left:1131.00px;top:722.00px;width:217.00px;height:43.41px;background:#ffffff;border-left:1px solid #c9c9c9;border-right:1px solid #c9c9c9;box-sizing:border-box"></div>
<svg style="position:absolute;left:1146.00px;top:730.02px" width="23.68" height="21.05" viewBox="0 0 18 16" overflow="visible"><path d="M17.6 -0.9 C18.8 3 18.9 8 16.6 11.5 C14 15 8 15.6 4.2 14.5 L1.3 15.2 C-0.6 11 0.6 6.5 4.5 4.6 C8.5 2.8 13.5 3.4 17.6 -0.9 Z" fill="#36b34a"/><polygon points="19.40,12.20 16.60,17.05 11.00,17.05 8.20,12.20 11.00,7.35 16.60,7.35" fill="#62666a" stroke="#62666a" stroke-width="0.8" stroke-linejoin="round"/><path d="M12.10 10.20 A2.7 2.7 0 1 0 15.50 10.20" fill="none" stroke="#e9e9e9" stroke-width="1"/><path d="M13.80 8.80 V12.00" stroke="#e9e9e9" stroke-width="1"/></svg>
<div style="position:absolute;left:1176.00px;top:728.74px;height:26.25px;line-height:26.25px;font-family:'DejaVu Sans','Liberation Sans',sans-serif;font-size:17.50px;color:#9c3b1c;font-weight:normal;white-space:pre;-webkit-text-stroke-width:0.3px;">application.yml</div>
<svg style="position:absolute;left:1322.08px;top:735.42px" width="11.84" height="11.84" viewBox="0 0 9 9" ><path d="M1 1 L8 8 M8 1 L1 8" stroke="#6b6b6b" stroke-width="1.9"/></svg>
<div style="position:absolute;left:1348.00px;top:722.00px;width:267.00px;height:38.15px;background:#d8d8d8;border-right:1px solid #cbcbcb;box-sizing:border-box"></div>
<svg style="position:absolute;left:1365.00px;top:730.02px" width="23.68" height="21.05" viewBox="0 0 18 16" overflow="visible"><circle cx="9" cy="7.9" r="8.1" fill="#abd9f5" stroke="#85bde3" stroke-width="1.1"/><text x="9.2" y="11.8" font-family="DejaVu Sans, sans-serif" font-size="10.8" text-anchor="middle" fill="#3d5268">C</text></svg>
<div style="position:absolute;left:1394.00px;top:728.74px;height:26.25px;line-height:26.25px;font-family:'DejaVu Sans','Liberation Sans',sans-serif;font-size:17.50px;color:#c06a4c;font-weight:normal;white-space:pre;letter-spacing:0.012em;-webkit-text-stroke-width:0.15px;">DemoController.java</div>
<svg style="position:absolute;left:1588.08px;top:735.42px" width="11.84" height="11.84" viewBox="0 0 9 9" ><path d="M1 1 L8 8 M8 1 L1 8" stroke="#6b6b6b" stroke-width="1.9"/></svg>
<div style="position:absolute;left:721.00px;top:760.00px;width:999.00px;height:5.50px;background:#ffffff;"></div>
<div style="position:absolute;left:721.00px;top:759.00px;width:410.00px;height:1.30px;background:#c4c4c4;"></div>
<div style="position:absolute;left:1348.00px;top:759.00px;width:372.00px;height:1.30px;background:#c4c4c4;"></div>
<div style="position:absolute;left:721.00px;top:765.00px;width:999.00px;height:1.40px;background:#c2c2c2;"></div>
<div style="position:absolute;left:721.00px;top:766.40px;width:999.00px;height:44.00px;background:#efefef;border-bottom:1px solid #c9c9c9;box-sizing:border-box"></div>
<div style="position:absolute;left:721.00px;top:810.40px;width:86.00px;height:425.00px;background:#f0f0f0;border-right:1px solid #d0d0d0;box-sizing:border-box"></div>
<div style="position:absolute;left:721.00px;top:838.50px;width:999.00px;height:28.00px;background:#fffae3;"></div>
<div style="position:absolute;left:806.00px;top:838.50px;width:1.00px;height:28.00px;background:#d8d4c4;"></div>
<div style="position:absolute;left:703.50px;top:811.05px;height:30.75px;line-height:30.75px;font-family:'DejaVu Sans','Liberation Sans',sans-serif;font-size:20.50px;color:#999;font-weight:normal;white-space:pre;width:40px;text-align:right;-webkit-text-stroke-width:0.2px;">1</div>
<div style="position:absolute;left:816.00px;top:809.10px;height:34.65px;line-height:34.65px;font-family:'Liberation Mono',monospace;font-size:23.10px;color:#000;font-weight:normal;white-space:pre;transform:scaleX(1.193);transform-origin:0 50%;-webkit-text-stroke-width:0.22px;"><b style="color:#000080">server:</b></div>
<div style="position:absolute;left:703.50px;top:839.15px;height:30.75px;line-height:30.75px;font-family:'DejaVu Sans','Liberation Sans',sans-serif;font-size:20.50px;color:#999;font-weight:normal;white-space:pre;width:40px;text-align:right;-webkit-text-stroke-width:0.2px;">2</div>
<div style="position:absolute;left:816.00px;top:837.20px;height:34.65px;line-height:34.65px;font-family:'Liberation Mono',monospace;font-size:23.10px;color:#000;font-weight:normal;white-space:pre;transform:scaleX(1.193);transform-origin:0 50%;-webkit-text-stroke-width:0.22px;">  <b style="color:#000080">port:</b> <span style="font-family:'DejaVu Sans Mono',monospace;font-size:0.94em;-webkit-text-stroke-width:0;margin-left:2px">8701</span></div>
<svg style="position:absolute;left:800.72px;top:817.92px" width="13.15" height="17.10" viewBox="0 0 10 13" ><path d="M0.6 0.6 H9.4 V7.6 L5 12.4 L0.6 7.6 Z" fill="#fff" stroke="#c6c6c6" stroke-width="1"/><path d="M2.8 4.4 H7.2" stroke="#b4b4b4" stroke-width="1"/></svg>
<svg style="position:absolute;left:800.72px;top:843.65px" width="13.15" height="17.10" viewBox="0 0 10 13" ><path d="M0.6 12.4 H9.4 V5.4 L5 0.6 L0.6 5.4 Z" fill="#fff" stroke="#c6c6c6" stroke-width="1"/><path d="M2.8 8.6 H7.2" stroke="#b4b4b4" stroke-width="1"/></svg>
<div style="position:absolute;left:795.00px;top:795.60px;width:283.60px;height:96.00px;background:transparent;border:4.4px solid #e8392e;border-radius:8px;box-sizing:border-box"></div>
<div style="position:absolute;left:1106px;top:825px;font-family:'Liberation Sans','Noto Sans CJK SC',sans-serif;font-size:30px;line-height:38px;color:#e8382d;white-space:nowrap">修改端口号</div>
</div></div>
</body></html>
